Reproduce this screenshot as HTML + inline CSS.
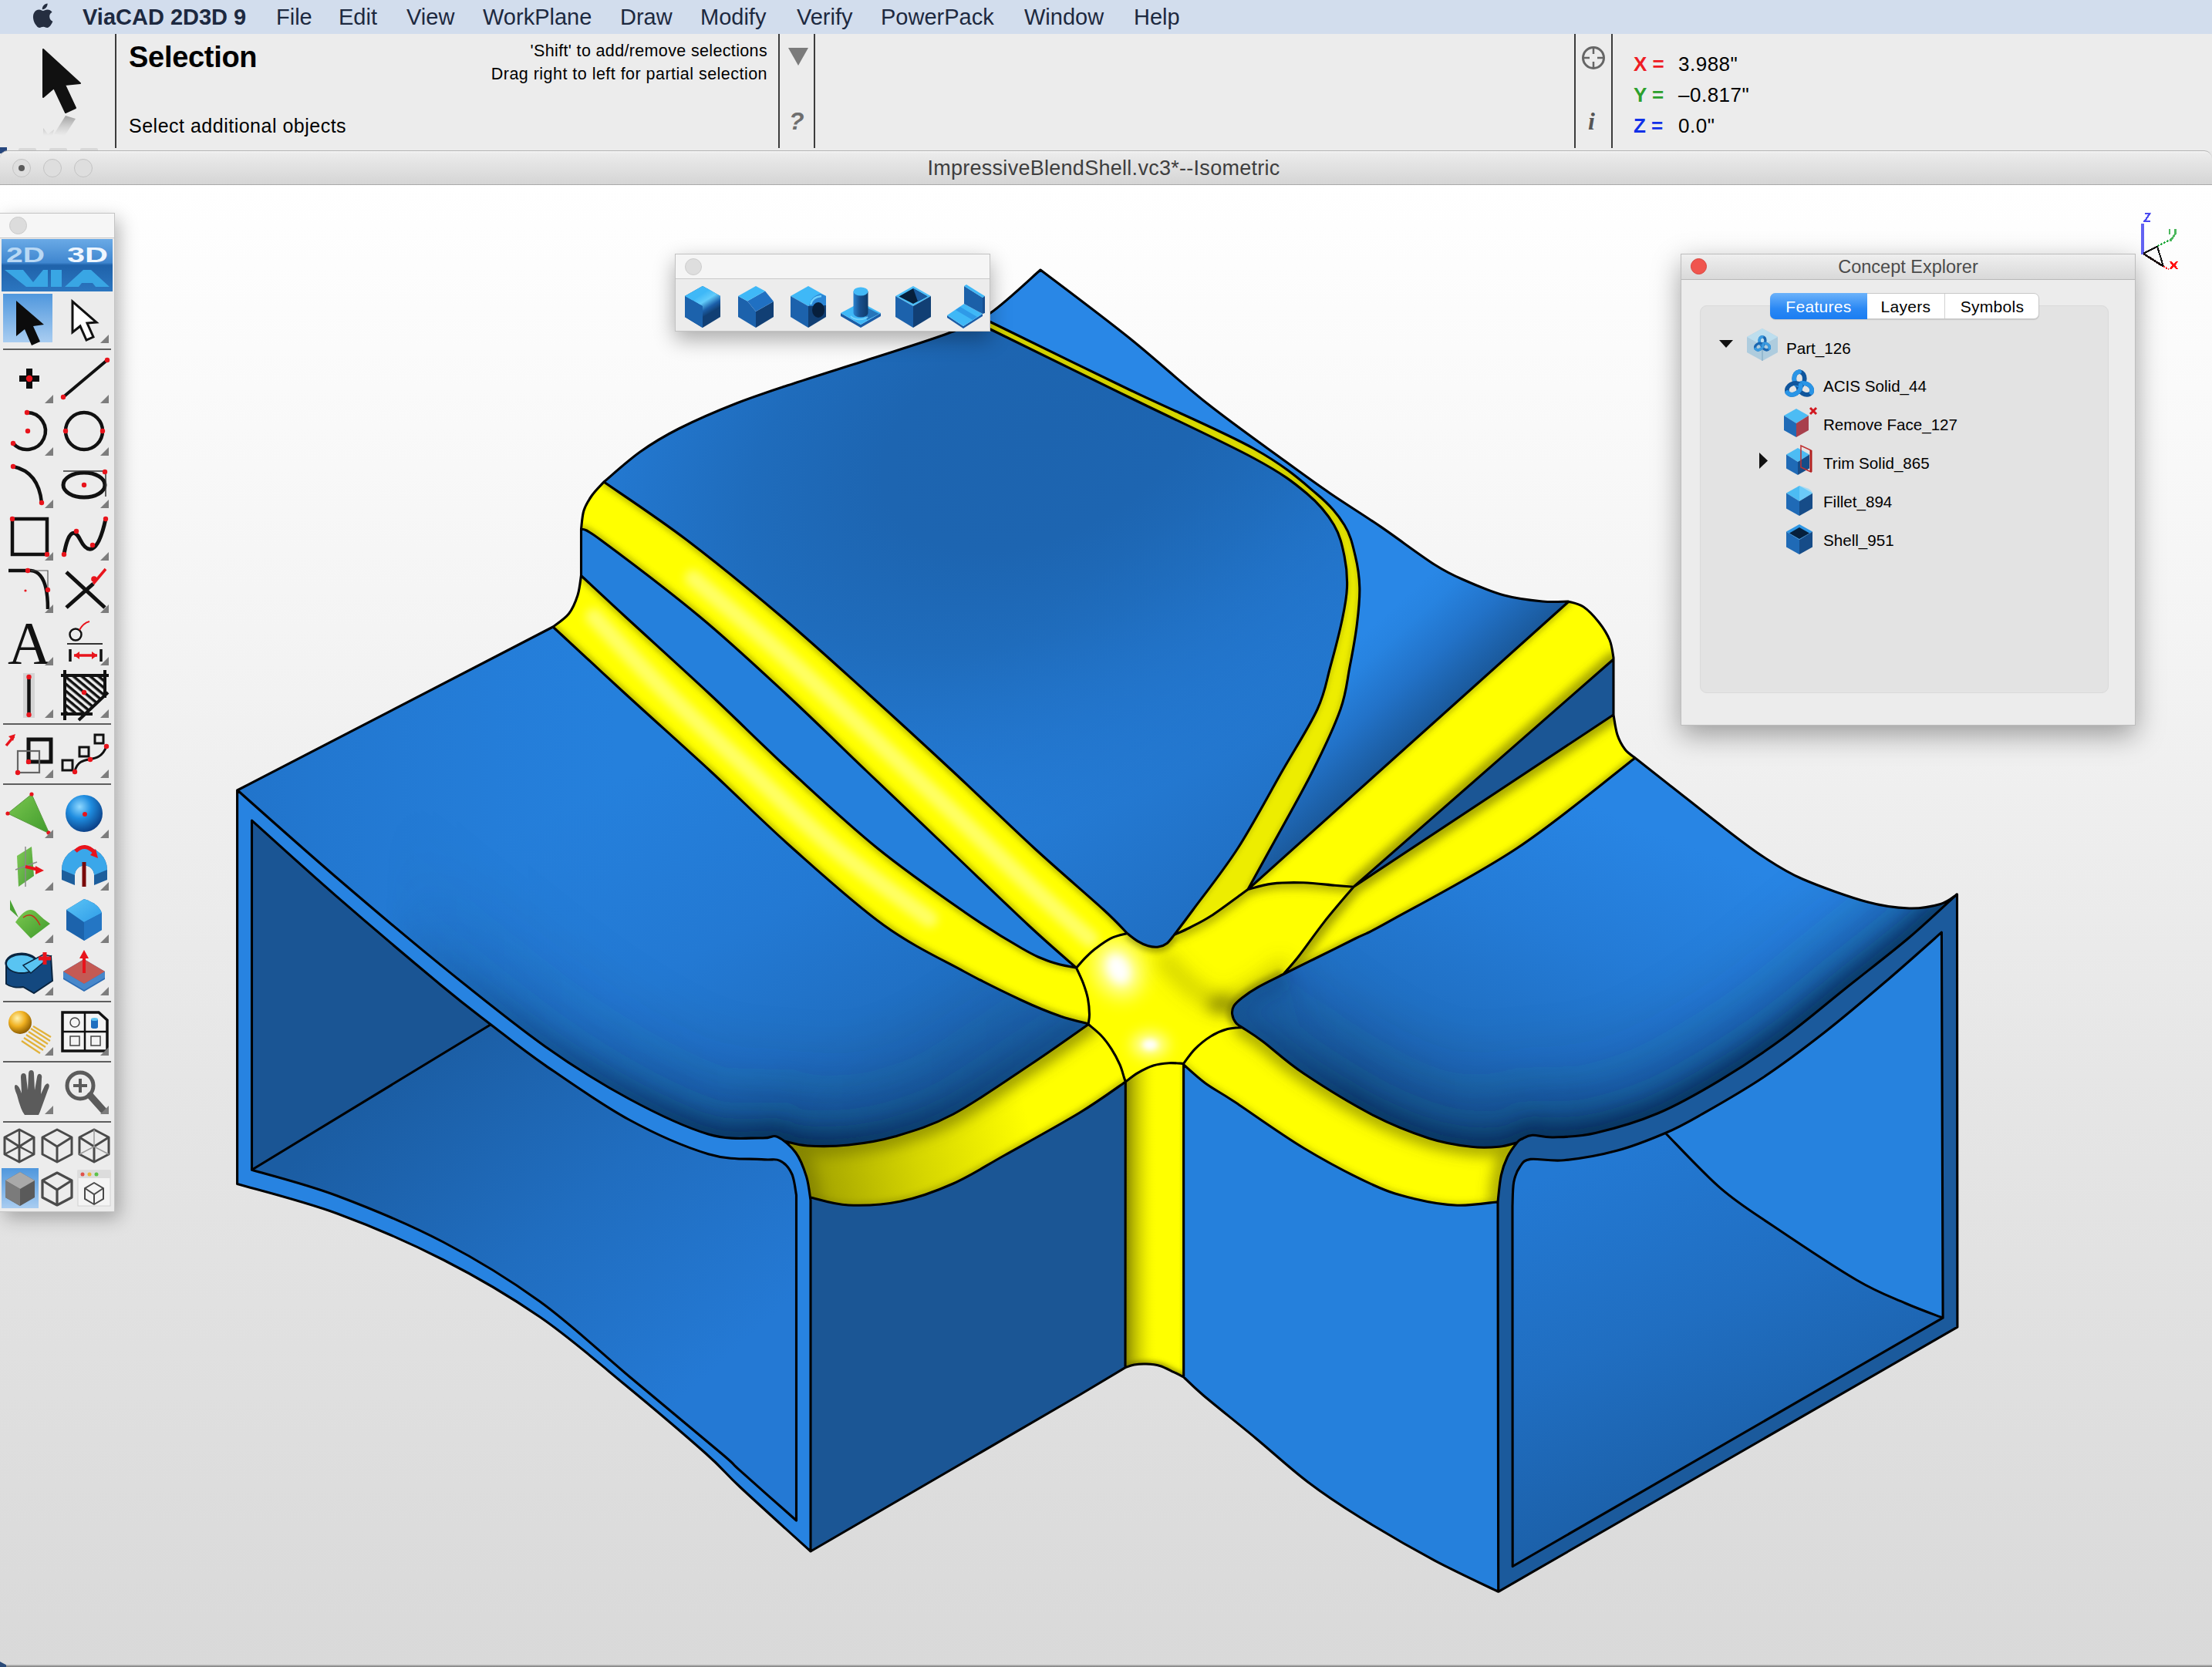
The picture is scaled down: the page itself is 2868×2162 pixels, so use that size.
<!DOCTYPE html>
<html>
<head>
<meta charset="utf-8">
<title>ViaCAD 2D3D 9</title>
<style>
html,body{margin:0;padding:0;}
body{width:2868px;height:2162px;position:relative;overflow:hidden;background:#e9e9e9;font-family:"Liberation Sans",sans-serif;color:#000;}
.abs{position:absolute;}
#menubar{left:0;top:0;width:2868px;height:44px;background:#d2dded;}
#menubar span{position:absolute;top:5px;font-size:29px;line-height:34px;color:#1d2940;white-space:nowrap;}
#infobar{left:0;top:44px;width:2868px;height:150px;background:#ececec;}
.vline{position:absolute;width:2px;background:#3c3c3c;top:44px;height:148px;}
#titlebar{left:0;top:195px;width:2868px;height:43px;background:linear-gradient(#f4f4f4 0,#ebebeb 8%,#d5d5d5 100%);border-bottom:1.500px solid #a9a9a9;border-top:1px solid #b4b4b4;border-radius:10px 10px 0 0;}
#canvas{left:0;top:240px;width:2868px;height:1922px;background:linear-gradient(#ffffff 0%,#f4f4f4 30%,#e6e6e6 60%,#d9d9d9 100%);}
.tl{position:absolute;width:22px;height:22px;border-radius:50%;background:#dedede;border:1px solid #c3c3c3;}
</style>
</head>
<body>
<!-- canvas -->
<div id="canvas" class="abs"></div>

<!-- MODEL -->
<!--MODEL_START-->
<svg class="abs" style="left:0;top:0" width="2868" height="2162" viewBox="0 0 2868 2162"><defs><filter id="bl3" filterUnits="userSpaceOnUse" x="250" y="300" width="2350" height="1800"><feGaussianBlur stdDeviation="3"/></filter>
<filter id="bl4" filterUnits="userSpaceOnUse" x="250" y="300" width="2350" height="1800"><feGaussianBlur stdDeviation="3.5"/></filter>
<filter id="bl6" filterUnits="userSpaceOnUse" x="250" y="300" width="2350" height="1800"><feGaussianBlur stdDeviation="6"/></filter>
<filter id="bl9" filterUnits="userSpaceOnUse" x="250" y="300" width="2350" height="1800"><feGaussianBlur stdDeviation="9"/></filter>
<filter id="bl12" filterUnits="userSpaceOnUse" x="250" y="300" width="2350" height="1800"><feGaussianBlur stdDeviation="12"/></filter>
<filter id="bl18" filterUnits="userSpaceOnUse" x="250" y="300" width="2350" height="1800"><feGaussianBlur stdDeviation="18"/></filter>
<filter id="bl25" filterUnits="userSpaceOnUse" x="250" y="300" width="2350" height="1800"><feGaussianBlur stdDeviation="25"/></filter>
<filter id="bl40" filterUnits="userSpaceOnUse" x="250" y="300" width="2350" height="1800"><feGaussianBlur stdDeviation="40"/></filter>
<filter id="bl22" filterUnits="userSpaceOnUse" x="250" y="300" width="2350" height="1800"><feGaussianBlur stdDeviation="26"/></filter>
<linearGradient id="mS1g" gradientUnits="userSpaceOnUse" x1="500" y1="0" x2="1420" y2="0"><stop offset="0" stop-color="#fff" stop-opacity="0"/><stop offset="0.2" stop-color="#fff" stop-opacity="0.5"/><stop offset="0.42" stop-color="#fff" stop-opacity="0.88"/><stop offset="0.58" stop-color="#fff" stop-opacity="1"/><stop offset="0.77" stop-color="#fff" stop-opacity="0.75"/><stop offset="0.92" stop-color="#fff" stop-opacity="0.42"/><stop offset="1" stop-color="#fff" stop-opacity="0.32"/></linearGradient>
<mask id="mS1" maskUnits="userSpaceOnUse" x="250" y="300" width="2350" height="1800"><rect x="250" y="300" width="2350" height="1800" fill="url(#mS1g)"/></mask>
<linearGradient id="mS4g" gradientUnits="userSpaceOnUse" x1="1600" y1="0" x2="2050" y2="0"><stop offset="0" stop-color="#fff" stop-opacity="0.3"/><stop offset="0.12" stop-color="#fff" stop-opacity="0.45"/><stop offset="0.35" stop-color="#fff" stop-opacity="0.85"/><stop offset="1" stop-color="#fff" stop-opacity="1"/></linearGradient>
<mask id="mS4" maskUnits="userSpaceOnUse" x="250" y="300" width="2350" height="1800"><rect x="250" y="300" width="2350" height="1800" fill="url(#mS4g)"/></mask>
<radialGradient id="gTop" gradientUnits="userSpaceOnUse" cx="1350" cy="560" r="780" gradientTransform="rotate(-26 1350 560) scale(1 0.62) translate(0 343)"><stop offset="0" stop-color="#1d64af"/><stop offset="0.28" stop-color="#1d65b1"/><stop offset="0.52" stop-color="#1f6cbc"/><stop offset="0.78" stop-color="#2378d0"/><stop offset="1" stop-color="#2783e0"/></radialGradient>
<linearGradient id="gTop2" gradientUnits="userSpaceOnUse" x1="1230" y1="880" x2="1480" y2="1230"><stop offset="0" stop-color="#2272c8" stop-opacity="0"/><stop offset="1" stop-color="#206fc3" stop-opacity="0.95"/></linearGradient>
<clipPath id="cS2"><path d="M783.0 625.0 C790.8 618.5 813.8 597.5 830.0 586.0 C846.2 574.5 859.2 566.5 880.0 556.0 C900.8 545.5 930.0 532.8 955.0 523.0 C980.0 513.2 1000.8 506.7 1030.0 497.0 C1059.2 487.3 1096.7 475.8 1130.0 465.0 C1163.3 454.2 1204.3 441.8 1230.0 432.0 C1255.7 422.2 1275.0 410.3 1284.0 406.0 L1284.0 406.0 L1276.0 423.0 L1276.0 423.0 C1277.3 423.7 1252.8 411.7 1284.0 427.0 C1315.2 442.3 1406.5 487.1 1463.5 515.0 C1520.5 542.9 1587.5 573.7 1626.0 594.5 C1664.5 615.3 1677.0 625.6 1694.3 640.0 C1711.5 654.4 1721.4 667.1 1729.5 680.7 C1737.6 694.3 1740.3 707.9 1743.1 721.4 C1745.9 734.9 1747.0 748.4 1746.5 762.0 C1746.0 775.6 1744.0 785.6 1740.4 802.8 C1736.8 820.0 1730.2 845.5 1724.8 865.0 C1719.4 884.5 1718.4 897.5 1708.0 920.0 C1697.6 942.5 1679.7 970.0 1662.5 1000.0 C1645.3 1030.0 1624.3 1070.0 1605.0 1100.0 C1585.7 1130.0 1560.6 1161.2 1546.8 1180.0 C1533.0 1198.8 1526.5 1207.1 1522.4 1212.5 L1522.4 1212.5 C1520.8 1214.3 1516.4 1220.8 1513.0 1223.4 C1509.6 1226.0 1506.1 1227.4 1502.0 1228.0 C1497.9 1228.6 1493.0 1228.0 1488.5 1226.8 C1484.0 1225.6 1479.5 1223.4 1475.0 1220.7 C1470.5 1218.0 1463.7 1212.2 1461.4 1210.5 L1461.4 1210.5 C1456.3 1205.4 1451.1 1198.4 1431.0 1180.0 C1410.9 1161.6 1373.7 1130.0 1341.0 1100.0 C1308.3 1070.0 1270.8 1033.3 1235.0 1000.0 C1199.2 966.7 1162.9 933.3 1126.0 900.0 C1089.1 866.7 1052.8 833.3 1013.5 800.0 C974.2 766.7 928.4 729.2 890.0 700.0 C851.6 670.8 800.8 637.5 783.0 625.0 Z"/></clipPath>
<linearGradient id="gS3" gradientUnits="userSpaceOnUse" x1="1828" y1="969" x2="1728" y2="858"><stop offset="0" stop-color="#1a589a"/><stop offset="0.12" stop-color="#1c5fa6"/><stop offset="0.45" stop-color="#2272c8"/><stop offset="0.8" stop-color="#2783e0"/><stop offset="1" stop-color="#2987e6"/></linearGradient>
<clipPath id="cS3"><path d="M1349.0 350.0 C1368.1 364.6 1427.5 408.9 1463.5 437.8 C1499.5 466.7 1531.3 496.5 1565.2 523.3 C1599.1 550.1 1640.3 579.1 1666.9 598.6 C1693.5 618.1 1704.2 625.9 1724.8 640.0 C1745.4 654.1 1768.1 668.0 1790.6 683.4 C1813.1 698.8 1841.8 720.6 1860.0 732.2 C1878.2 743.8 1885.0 746.4 1900.0 753.0 C1915.0 759.6 1933.3 767.5 1950.0 772.0 C1966.7 776.5 1986.2 778.7 2000.0 780.0 C2013.8 781.3 2027.5 780.0 2033.0 780.0 L1618.0 1153.6 L2033.0 781.0 L1618.0 1153.6 C1622.9 1144.7 1633.5 1125.6 1647.5 1100.0 C1661.5 1074.4 1686.9 1030.0 1702.0 1000.0 C1717.1 970.0 1730.0 942.5 1738.0 920.0 C1746.0 897.5 1746.4 883.4 1750.0 865.0 C1753.6 846.6 1757.3 826.7 1759.4 809.5 C1761.5 792.3 1763.2 776.7 1762.8 762.0 C1762.4 747.3 1760.6 734.9 1757.3 721.4 C1754.0 707.9 1751.5 694.3 1743.0 680.7 C1734.5 667.1 1726.0 656.5 1706.5 640.0 C1687.0 623.5 1666.5 604.5 1626.0 582.0 C1585.5 559.5 1520.5 532.4 1463.5 505.0 C1406.5 477.6 1316.2 433.3 1284.0 417.5 C1251.8 401.7 1272.3 411.2 1270.0 410.0 L1270.0 410.0 L1284.0 406.0 L1349.0 350.0 Z"/></clipPath>
<linearGradient id="gS1" gradientUnits="userSpaceOnUse" x1="820" y1="1000" x2="1080" y2="1490"><stop offset="0" stop-color="#2580dc"/><stop offset="0.45" stop-color="#2379d3"/><stop offset="0.75" stop-color="#2070c4"/><stop offset="1" stop-color="#1c62ab"/></linearGradient>
<linearGradient id="gS1b" gradientUnits="userSpaceOnUse" x1="310" y1="1100" x2="800" y2="1100"><stop offset="0" stop-color="#2174cb"/><stop offset="1" stop-color="#2378d2" stop-opacity="0"/></linearGradient>
<clipPath id="cS1"><path d="M307.6 1025.0 L717.0 813.0 L717.0 813.0 C732.7 827.5 777.0 868.8 811.0 900.0 C845.0 931.2 884.9 966.7 921.0 1000.0 C957.1 1033.3 990.0 1066.7 1027.5 1100.0 C1065.0 1133.3 1108.9 1173.3 1146.0 1200.0 C1183.1 1226.7 1220.2 1243.8 1250.0 1260.0 C1279.8 1276.2 1304.2 1287.8 1325.0 1297.5 C1345.8 1307.2 1360.6 1313.0 1375.0 1318.0 C1389.4 1323.0 1405.2 1326.2 1411.2 1327.8 L1411.2 1328.5 C1398.8 1337.1 1366.2 1360.6 1337.0 1380.0 C1307.8 1399.4 1265.5 1429.3 1236.0 1445.0 C1206.5 1460.7 1182.7 1467.3 1160.0 1474.0 C1137.3 1480.7 1118.8 1483.0 1100.0 1485.0 C1081.2 1487.0 1060.8 1486.8 1047.0 1486.0 C1033.2 1485.2 1022.0 1481.0 1017.0 1480.0 L1007.8 1474.4 C1004.4 1474.7 1002.1 1476.6 987.2 1476.0 C972.3 1475.4 947.0 1479.5 918.4 1471.0 C889.8 1462.5 850.6 1444.0 815.3 1425.0 C780.0 1406.0 747.5 1386.1 706.8 1357.2 C666.1 1328.3 616.4 1288.0 571.2 1251.4 C526.0 1214.8 479.5 1175.2 435.6 1137.5 C391.7 1099.8 329.3 1043.8 308.0 1025.0 Z"/></clipPath>
<linearGradient id="gS4" gradientUnits="userSpaceOnUse" x1="2150" y1="1080" x2="1990" y2="1480"><stop offset="0" stop-color="#2885e4"/><stop offset="0.4" stop-color="#247bd6"/><stop offset="0.75" stop-color="#2070c4"/><stop offset="1" stop-color="#1c62ab"/></linearGradient>
<clipPath id="cS4"><path d="M1664.0 1263.5 C1670.6 1260.2 1687.8 1251.8 1703.4 1244.0 C1719.0 1236.2 1741.6 1225.1 1757.7 1217.0 C1773.8 1208.9 1765.1 1215.1 1800.0 1195.6 C1834.9 1176.1 1913.7 1135.4 1967.0 1100.0 C2020.3 1064.6 2094.5 1002.5 2120.0 983.0 L2120.0 983.0 C2127.8 989.2 2147.5 1004.7 2167.0 1020.0 C2186.5 1035.3 2217.2 1059.8 2237.0 1075.0 C2256.8 1090.2 2269.3 1100.2 2286.0 1111.0 C2302.7 1121.8 2314.5 1130.2 2337.0 1140.0 C2359.5 1149.8 2397.9 1163.5 2421.0 1169.8 C2444.1 1176.1 2459.5 1177.5 2475.3 1178.0 C2491.1 1178.5 2505.6 1175.5 2516.0 1172.5 C2526.4 1169.5 2533.9 1162.1 2537.5 1160.0 L2537.0 1160.0 C2526.7 1169.3 2499.1 1195.8 2475.3 1216.0 C2451.5 1236.2 2421.1 1259.3 2394.0 1281.0 C2366.9 1302.7 2339.7 1326.1 2312.6 1346.0 C2285.5 1365.9 2258.3 1384.1 2231.2 1400.4 C2204.1 1416.7 2177.0 1432.3 2149.9 1443.8 C2122.8 1455.3 2091.1 1464.3 2068.5 1469.5 C2045.9 1474.7 2027.8 1474.5 2014.2 1475.0 C2000.6 1475.5 1993.9 1472.0 1987.1 1472.3 C1980.3 1472.6 1976.9 1475.4 1973.6 1477.0 C1970.2 1478.6 1968.1 1481.0 1967.0 1481.8 L1967.0 1481.8 C1963.1 1482.7 1953.5 1486.4 1943.6 1487.3 C1933.7 1488.2 1922.5 1489.1 1907.4 1487.3 C1892.3 1485.5 1874.3 1483.2 1853.2 1476.4 C1832.1 1469.6 1807.9 1460.6 1780.8 1446.6 C1753.7 1432.6 1714.2 1408.2 1690.4 1392.3 C1666.6 1376.4 1651.0 1361.0 1637.7 1351.0 C1624.4 1341.0 1615.1 1335.7 1610.6 1332.6 L1610.6 1332.6 C1609.2 1331.6 1604.6 1329.3 1602.4 1326.5 C1600.2 1323.7 1598.2 1319.2 1597.7 1315.6 C1597.2 1312.0 1597.6 1308.4 1599.7 1304.8 C1601.8 1301.2 1605.4 1298.1 1610.6 1294.0 C1615.8 1289.9 1622.1 1285.5 1631.0 1280.4 C1639.9 1275.3 1658.5 1266.3 1664.0 1263.5 Z"/></clipPath>
<clipPath id="cU1"><path d="M783.0 625.0 C800.8 637.5 851.6 670.8 890.0 700.0 C928.4 729.2 974.2 766.7 1013.5 800.0 C1052.8 833.3 1089.1 866.7 1126.0 900.0 C1162.9 933.3 1199.2 966.7 1235.0 1000.0 C1270.8 1033.3 1308.3 1070.0 1341.0 1100.0 C1373.7 1130.0 1410.9 1161.6 1431.0 1180.0 C1451.1 1198.4 1456.3 1205.4 1461.4 1210.5 L1461.4 1210.5 C1458.0 1211.5 1447.8 1213.3 1441.0 1216.6 C1434.2 1219.8 1426.4 1225.7 1420.7 1230.0 C1415.0 1234.3 1411.2 1238.2 1407.0 1242.4 C1402.8 1246.6 1397.5 1253.2 1395.6 1255.3 L1395.6 1255.3 C1385.2 1246.1 1361.3 1225.9 1333.5 1200.0 C1305.7 1174.1 1263.5 1133.3 1228.5 1100.0 C1193.5 1066.7 1158.4 1033.3 1123.5 1000.0 C1088.6 966.7 1055.0 933.3 1019.0 900.0 C983.0 866.7 947.6 833.3 907.5 800.0 C867.4 766.7 804.2 719.0 778.5 700.0 C752.8 681.0 757.7 688.3 753.5 686.0 L753.5 686.0 C754.1 682.0 754.7 669.2 757.0 662.0 C759.3 654.8 763.2 648.7 767.5 642.5 C771.8 636.3 780.4 627.9 783.0 625.0 Z"/></clipPath>
<clipPath id="cU2"><path d="M754.0 747.0 C763.5 755.8 783.3 774.5 811.0 800.0 C838.7 825.5 884.3 866.7 920.0 900.0 C955.7 933.3 988.8 966.7 1025.0 1000.0 C1061.2 1033.3 1100.0 1069.6 1137.5 1100.0 C1175.0 1130.4 1218.8 1160.8 1250.0 1182.5 C1281.2 1204.2 1306.2 1219.2 1325.0 1230.0 C1343.8 1240.8 1350.7 1243.3 1362.5 1247.5 C1374.3 1251.7 1390.1 1254.0 1395.6 1255.3 L1395.6 1255.3 C1397.1 1258.6 1401.9 1268.3 1404.4 1275.0 C1406.9 1281.7 1409.2 1288.5 1410.5 1295.3 C1411.8 1302.1 1412.4 1310.2 1412.5 1315.6 C1412.6 1321.0 1411.4 1325.8 1411.2 1327.8 L1411.2 1327.8 C1405.2 1326.2 1389.4 1323.0 1375.0 1318.0 C1360.6 1313.0 1345.8 1307.2 1325.0 1297.5 C1304.2 1287.8 1279.8 1276.2 1250.0 1260.0 C1220.2 1243.8 1183.1 1226.7 1146.0 1200.0 C1108.9 1173.3 1065.0 1133.3 1027.5 1100.0 C990.0 1066.7 957.1 1033.3 921.0 1000.0 C884.9 966.7 845.0 931.2 811.0 900.0 C777.0 868.8 732.7 827.5 717.0 813.0 L717.0 813.0 C720.4 810.2 732.2 802.8 737.5 796.0 C742.8 789.2 746.3 780.3 749.0 772.0 C751.7 763.7 752.8 750.3 753.5 746.0 Z"/></clipPath>
<clipPath id="cLb"><path d="M1411.2 1328.5 C1398.8 1337.1 1366.2 1360.6 1337.0 1380.0 C1307.8 1399.4 1265.5 1429.3 1236.0 1445.0 C1206.5 1460.7 1182.7 1467.3 1160.0 1474.0 C1137.3 1480.7 1118.8 1483.0 1100.0 1485.0 C1081.2 1487.0 1060.8 1486.8 1047.0 1486.0 C1033.2 1485.2 1022.0 1481.0 1017.0 1480.0 L1007.8 1474.4 C1011.8 1477.8 1025.5 1486.4 1031.8 1495.0 C1038.1 1503.6 1042.4 1515.7 1045.6 1526.0 C1048.8 1536.3 1050.1 1551.7 1051.0 1556.8 L1051.0 1553.0 C1059.2 1554.7 1080.5 1562.2 1100.0 1563.0 C1119.5 1563.8 1145.3 1562.7 1168.0 1558.0 C1190.7 1553.3 1213.5 1545.0 1236.0 1535.0 C1258.5 1525.0 1275.7 1513.3 1303.0 1498.0 C1330.3 1482.7 1374.0 1458.8 1400.0 1443.0 C1426.0 1427.2 1449.4 1409.7 1459.3 1403.0 L1459.3 1403.0 C1459.0 1402.0 1458.5 1400.7 1457.3 1397.0 C1456.1 1393.3 1454.6 1386.8 1451.9 1380.7 C1449.2 1374.6 1445.1 1366.7 1441.0 1360.4 C1436.9 1354.1 1432.5 1348.1 1427.5 1342.8 C1422.5 1337.5 1413.9 1330.9 1411.2 1328.5 Z"/></clipPath>
<clipPath id="cVb"><path d="M1459.3 1403.0 C1461.9 1401.1 1469.0 1395.1 1475.0 1391.6 C1481.0 1388.1 1488.5 1384.2 1495.3 1382.0 C1502.1 1379.8 1509.0 1379.1 1515.6 1378.7 C1522.1 1378.3 1531.4 1379.3 1534.6 1379.4 L1534.6 1379.4 L1534.7 1786.0 L1534.7 1786.0 C1532.6 1784.9 1527.1 1782.0 1522.0 1779.6 C1516.9 1777.2 1510.0 1773.2 1504.0 1771.4 C1498.0 1769.6 1491.6 1769.2 1486.0 1769.0 C1480.4 1768.8 1475.0 1769.2 1470.5 1770.0 C1466.0 1770.8 1460.9 1773.1 1459.0 1773.7 L1459.0 1773.7 L1459.3 1403.0 Z"/></clipPath>
<clipPath id="cRb"><path d="M1610.6 1332.6 C1615.1 1335.7 1624.4 1341.0 1637.7 1351.0 C1651.0 1361.0 1666.6 1376.4 1690.4 1392.3 C1714.2 1408.2 1753.7 1432.6 1780.8 1446.6 C1807.9 1460.6 1832.1 1469.6 1853.2 1476.4 C1874.3 1483.2 1892.3 1485.5 1907.4 1487.3 C1922.5 1489.1 1933.7 1488.2 1943.6 1487.3 C1953.5 1486.4 1963.1 1482.7 1967.0 1481.8 L1967.0 1481.8 C1964.9 1485.0 1957.9 1493.7 1954.4 1500.8 C1951.0 1507.9 1948.4 1514.6 1946.3 1524.3 C1944.2 1534.0 1942.7 1553.0 1942.0 1558.7 L1941.8 1558.7 C1933.0 1559.5 1907.1 1563.8 1889.3 1563.2 C1871.5 1562.6 1853.1 1559.4 1835.0 1555.0 C1816.9 1550.6 1804.9 1548.0 1780.8 1537.0 C1756.7 1526.0 1720.5 1507.1 1690.4 1489.0 C1660.3 1470.9 1621.2 1442.5 1600.0 1428.5 C1578.8 1414.5 1573.9 1413.0 1563.0 1405.0 C1552.1 1397.0 1539.3 1384.8 1534.6 1380.7 L1534.6 1379.4 C1537.1 1376.2 1543.6 1366.3 1549.5 1360.4 C1555.4 1354.5 1562.9 1348.3 1569.9 1344.0 C1576.9 1339.7 1584.8 1336.5 1591.6 1334.6 C1598.4 1332.7 1607.4 1332.9 1610.6 1332.6 Z"/></clipPath>
<clipPath id="cBb"><path d="M2033.0 781.0 L1618.0 1153.6 L1618.0 1153.6 C1623.2 1152.3 1637.2 1147.6 1649.2 1146.1 C1661.2 1144.6 1676.3 1144.4 1689.9 1144.8 C1703.5 1145.2 1719.8 1147.3 1730.6 1148.2 C1741.4 1149.1 1750.9 1149.9 1755.0 1150.2 L1755.0 1150.2 L2092.0 855.0 L2092.0 853.0 C2091.2 849.2 2090.2 837.7 2087.0 830.0 C2083.8 822.3 2078.7 814.2 2073.0 807.0 C2067.3 799.8 2059.7 791.5 2053.0 787.0 C2046.3 782.5 2036.3 781.2 2033.0 780.0 Z"/></clipPath>
<clipPath id="cAb"><path d="M2092.0 927.0 L1755.0 1150.2 L1755.0 1150.2 C1748.7 1157.8 1728.8 1180.6 1717.0 1195.6 C1705.2 1210.6 1692.8 1228.7 1684.0 1240.0 C1675.2 1251.3 1667.3 1259.6 1664.0 1263.5 L1664.0 1263.5 C1670.6 1260.2 1687.8 1251.8 1703.4 1244.0 C1719.0 1236.2 1741.6 1225.1 1757.7 1217.0 C1773.8 1208.9 1765.1 1215.1 1800.0 1195.6 C1834.9 1176.1 1913.7 1135.4 1967.0 1100.0 C2020.3 1064.6 2094.5 1002.5 2120.0 983.0 L2120.0 983.0 C2117.8 981.2 2110.8 977.0 2107.0 972.0 C2103.2 967.0 2099.5 960.5 2097.0 953.0 C2094.5 945.5 2092.8 931.3 2092.0 927.0 Z"/></clipPath>
<clipPath id="cTb"><path d="M1276.0 423.0 C1277.3 423.7 1252.8 411.7 1284.0 427.0 C1315.2 442.3 1406.5 487.1 1463.5 515.0 C1520.5 542.9 1587.5 573.7 1626.0 594.5 C1664.5 615.3 1677.0 625.6 1694.3 640.0 C1711.5 654.4 1721.4 667.1 1729.5 680.7 C1737.6 694.3 1740.3 707.9 1743.1 721.4 C1745.9 734.9 1747.0 748.4 1746.5 762.0 C1746.0 775.6 1744.0 785.6 1740.4 802.8 C1736.8 820.0 1730.2 845.5 1724.8 865.0 C1719.4 884.5 1718.4 897.5 1708.0 920.0 C1697.6 942.5 1679.7 970.0 1662.5 1000.0 C1645.3 1030.0 1624.3 1070.0 1605.0 1100.0 C1585.7 1130.0 1560.6 1161.2 1546.8 1180.0 C1533.0 1198.8 1526.5 1207.1 1522.4 1212.5 L1522.4 1212.5 C1525.8 1210.9 1534.9 1207.1 1542.8 1203.0 C1550.7 1198.9 1559.0 1195.1 1570.0 1188.0 C1581.0 1180.9 1600.5 1166.1 1608.5 1160.4 C1616.5 1154.7 1616.4 1154.7 1618.0 1153.6 L1618.0 1153.6 C1622.9 1144.7 1633.5 1125.6 1647.5 1100.0 C1661.5 1074.4 1686.9 1030.0 1702.0 1000.0 C1717.1 970.0 1730.0 942.5 1738.0 920.0 C1746.0 897.5 1746.4 883.4 1750.0 865.0 C1753.6 846.6 1757.3 826.7 1759.4 809.5 C1761.5 792.3 1763.2 776.7 1762.8 762.0 C1762.4 747.3 1760.6 734.9 1757.3 721.4 C1754.0 707.9 1751.5 694.3 1743.0 680.7 C1734.5 667.1 1726.0 656.5 1706.5 640.0 C1687.0 623.5 1666.5 604.5 1626.0 582.0 C1585.5 559.5 1520.5 532.4 1463.5 505.0 C1406.5 477.6 1316.2 433.3 1284.0 417.5 C1251.8 401.7 1272.3 411.2 1270.0 410.0 Z"/></clipPath>
<clipPath id="chub"><path d="M1395.6 1255.3 C1397.5 1253.2 1402.8 1246.6 1407.0 1242.4 C1411.2 1238.2 1415.0 1234.3 1420.7 1230.0 C1426.4 1225.7 1434.2 1219.8 1441.0 1216.6 C1447.8 1213.3 1458.0 1211.5 1461.4 1210.5 L1461.4 1210.5 C1463.7 1212.2 1470.5 1218.0 1475.0 1220.7 C1479.5 1223.4 1484.0 1225.6 1488.5 1226.8 C1493.0 1228.0 1497.9 1228.6 1502.0 1228.0 C1506.1 1227.4 1509.6 1226.0 1513.0 1223.4 C1516.4 1220.8 1520.8 1214.3 1522.4 1212.5 L1522.4 1212.5 C1525.8 1210.9 1534.9 1207.1 1542.8 1203.0 C1550.7 1198.9 1559.0 1195.1 1570.0 1188.0 C1581.0 1180.9 1600.5 1166.1 1608.5 1160.4 C1616.5 1154.7 1616.4 1154.7 1618.0 1153.6 L1618.0 1153.6 C1623.2 1152.3 1637.2 1147.6 1649.2 1146.1 C1661.2 1144.6 1676.3 1144.4 1689.9 1144.8 C1703.5 1145.2 1719.8 1147.3 1730.6 1148.2 C1741.4 1149.1 1750.9 1149.9 1755.0 1150.2 L1755.0 1150.2 C1748.7 1157.8 1728.8 1180.6 1717.0 1195.6 C1705.2 1210.6 1692.8 1228.7 1684.0 1240.0 C1675.2 1251.3 1667.3 1259.6 1664.0 1263.5 L1664.0 1263.5 C1658.5 1266.3 1639.9 1275.3 1631.0 1280.4 C1622.1 1285.5 1615.8 1289.9 1610.6 1294.0 C1605.4 1298.1 1601.8 1301.2 1599.7 1304.8 C1597.6 1308.4 1597.2 1312.0 1597.7 1315.6 C1598.2 1319.2 1600.2 1323.7 1602.4 1326.5 C1604.6 1329.3 1609.2 1331.6 1610.6 1332.6 L1610.6 1332.6 C1607.4 1332.9 1598.4 1332.7 1591.6 1334.6 C1584.8 1336.5 1576.9 1339.7 1569.9 1344.0 C1562.9 1348.3 1555.4 1354.5 1549.5 1360.4 C1543.6 1366.3 1537.1 1376.2 1534.6 1379.4 L1534.6 1379.4 C1531.4 1379.3 1522.1 1378.3 1515.6 1378.7 C1509.0 1379.1 1502.1 1379.8 1495.3 1382.0 C1488.5 1384.2 1481.0 1388.1 1475.0 1391.6 C1469.0 1395.1 1461.9 1401.1 1459.3 1403.0 L1459.3 1403.0 C1459.0 1402.0 1458.5 1400.7 1457.3 1397.0 C1456.1 1393.3 1454.6 1386.8 1451.9 1380.7 C1449.2 1374.6 1445.1 1366.7 1441.0 1360.4 C1436.9 1354.1 1432.5 1348.1 1427.5 1342.8 C1422.5 1337.5 1413.9 1330.9 1411.2 1328.5 L1411.2 1327.8 C1411.4 1325.8 1412.6 1321.0 1412.5 1315.6 C1412.4 1310.2 1411.8 1302.1 1410.5 1295.3 C1409.2 1288.5 1406.9 1281.7 1404.4 1275.0 C1401.9 1268.3 1397.1 1258.6 1395.6 1255.3 Z"/></clipPath>
<linearGradient id="gLb" gradientUnits="userSpaceOnUse" x1="1040" y1="1520" x2="1330" y2="1440"><stop offset="0" stop-color="#7d7d00" stop-opacity="0.75"/><stop offset="0.5" stop-color="#8a8a00" stop-opacity="0.35"/><stop offset="1" stop-color="#8a8a00" stop-opacity="0"/></linearGradient>
<linearGradient id="gVb" gradientUnits="userSpaceOnUse" x1="1459" y1="0" x2="1535" y2="0"><stop offset="0" stop-color="#6e6e00" stop-opacity="0.85"/><stop offset="0.28" stop-color="#b4b400" stop-opacity="0.45"/><stop offset="0.55" stop-color="#ffff00" stop-opacity="0"/><stop offset="0.9" stop-color="#ffff00" stop-opacity="0"/><stop offset="1" stop-color="#8a8a00" stop-opacity="0.55"/></linearGradient>
<linearGradient id="gLOfloor" gradientUnits="userSpaceOnUse" x1="520" y1="1380" x2="900" y2="1800"><stop offset="0" stop-color="#1b5da3"/><stop offset="0.5" stop-color="#206dbf"/><stop offset="1" stop-color="#2479d4"/></linearGradient>
<linearGradient id="gRO" gradientUnits="userSpaceOnUse" x1="2020" y1="1520" x2="2200" y2="1960"><stop offset="0" stop-color="#2379d3"/><stop offset="0.5" stop-color="#206ec1"/><stop offset="1" stop-color="#1b5fa7"/></linearGradient></defs>
<path d="M307.6 1025.0 L717.0 813.0 L717.0 813.0 C720.4 810.2 732.2 802.8 737.5 796.0 C742.8 789.2 746.3 780.3 749.0 772.0 C751.7 763.7 752.8 750.3 753.5 746.0 L753.5 746.0 L753.5 686.0 L753.5 686.0 C754.1 682.0 754.7 669.2 757.0 662.0 C759.3 654.8 763.2 648.7 767.5 642.5 C771.8 636.3 780.4 627.9 783.0 625.0 L783.0 625.0 C790.8 618.5 813.8 597.5 830.0 586.0 C846.2 574.5 859.2 566.5 880.0 556.0 C900.8 545.5 930.0 532.8 955.0 523.0 C980.0 513.2 1000.8 506.7 1030.0 497.0 C1059.2 487.3 1096.7 475.8 1130.0 465.0 C1163.3 454.2 1204.3 441.8 1230.0 432.0 C1255.7 422.2 1264.2 419.7 1284.0 406.0 C1303.8 392.3 1338.2 359.3 1349.0 350.0 L1349.0 350.0 C1368.1 364.6 1427.5 408.9 1463.5 437.8 C1499.5 466.7 1531.3 496.5 1565.2 523.3 C1599.1 550.1 1640.3 579.1 1666.9 598.6 C1693.5 618.1 1704.2 625.9 1724.8 640.0 C1745.4 654.1 1768.1 668.0 1790.6 683.4 C1813.1 698.8 1841.8 720.6 1860.0 732.2 C1878.2 743.8 1885.0 746.4 1900.0 753.0 C1915.0 759.6 1933.3 767.5 1950.0 772.0 C1966.7 776.5 1986.2 778.7 2000.0 780.0 C2013.8 781.3 2027.5 780.0 2033.0 780.0 L2033.0 780.0 C2036.3 781.2 2046.3 782.5 2053.0 787.0 C2059.7 791.5 2067.3 799.8 2073.0 807.0 C2078.7 814.2 2083.8 822.3 2087.0 830.0 C2090.2 837.7 2091.2 849.2 2092.0 853.0 L2092.0 853.0 L2092.0 927.0 L2092.0 927.0 C2092.8 931.3 2094.5 945.5 2097.0 953.0 C2099.5 960.5 2103.2 967.0 2107.0 972.0 C2110.8 977.0 2117.8 981.2 2120.0 983.0 L2120.0 983.0 C2127.8 989.2 2147.5 1004.7 2167.0 1020.0 C2186.5 1035.3 2217.2 1059.8 2237.0 1075.0 C2256.8 1090.2 2269.3 1100.2 2286.0 1111.0 C2302.7 1121.8 2314.5 1130.2 2337.0 1140.0 C2359.5 1149.8 2397.9 1163.5 2421.0 1169.8 C2444.1 1176.1 2459.5 1177.5 2475.3 1178.0 C2491.1 1178.5 2505.6 1175.5 2516.0 1172.5 C2526.4 1169.5 2533.9 1162.1 2537.5 1160.0 L2537.5 1160.0 L2537.9 1721.2 L2537.9 1721.2 L1942.7 2064.3 L1942.7 2064.3 C1928.9 2057.6 1889.9 2039.8 1860.0 2023.8 C1830.1 2007.8 1790.8 1985.0 1763.4 1968.0 C1736.0 1951.0 1718.2 1939.2 1695.6 1922.0 C1673.0 1904.8 1650.4 1883.8 1627.8 1865.0 C1605.2 1846.2 1575.5 1822.7 1560.0 1809.5 C1544.5 1796.3 1538.9 1789.9 1534.7 1786.0 L1534.7 1786.0 C1532.6 1784.9 1527.1 1782.0 1522.0 1779.6 C1516.9 1777.2 1510.0 1773.2 1504.0 1771.4 C1498.0 1769.6 1491.6 1769.2 1486.0 1769.0 C1480.4 1768.8 1475.0 1769.2 1470.5 1770.0 C1466.0 1770.8 1460.9 1773.1 1459.0 1773.7 L1459.0 1773.7 L1400.0 1809.0 L1051.0 2012.0 L1051.0 2012.0 C1035.8 1998.2 982.7 1950.2 960.0 1929.0 C937.3 1907.8 940.3 1907.5 915.0 1885.0 C889.7 1862.5 843.8 1823.5 808.0 1794.0 C772.2 1764.5 738.9 1734.7 700.0 1708.0 C661.1 1681.3 618.7 1656.3 574.9 1634.0 C531.1 1611.7 481.9 1590.4 437.4 1574.0 C392.8 1557.6 329.2 1541.9 307.6 1535.5 L307.6 1535.5 L307.6 1025.0 Z" fill="#2580dc" />
<path d="M783.0 625.0 C790.8 618.5 813.8 597.5 830.0 586.0 C846.2 574.5 859.2 566.5 880.0 556.0 C900.8 545.5 930.0 532.8 955.0 523.0 C980.0 513.2 1000.8 506.7 1030.0 497.0 C1059.2 487.3 1096.7 475.8 1130.0 465.0 C1163.3 454.2 1204.3 441.8 1230.0 432.0 C1255.7 422.2 1275.0 410.3 1284.0 406.0 L1284.0 406.0 L1276.0 423.0 L1276.0 423.0 C1277.3 423.7 1252.8 411.7 1284.0 427.0 C1315.2 442.3 1406.5 487.1 1463.5 515.0 C1520.5 542.9 1587.5 573.7 1626.0 594.5 C1664.5 615.3 1677.0 625.6 1694.3 640.0 C1711.5 654.4 1721.4 667.1 1729.5 680.7 C1737.6 694.3 1740.3 707.9 1743.1 721.4 C1745.9 734.9 1747.0 748.4 1746.5 762.0 C1746.0 775.6 1744.0 785.6 1740.4 802.8 C1736.8 820.0 1730.2 845.5 1724.8 865.0 C1719.4 884.5 1718.4 897.5 1708.0 920.0 C1697.6 942.5 1679.7 970.0 1662.5 1000.0 C1645.3 1030.0 1624.3 1070.0 1605.0 1100.0 C1585.7 1130.0 1560.6 1161.2 1546.8 1180.0 C1533.0 1198.8 1526.5 1207.1 1522.4 1212.5 L1522.4 1212.5 C1520.8 1214.3 1516.4 1220.8 1513.0 1223.4 C1509.6 1226.0 1506.1 1227.4 1502.0 1228.0 C1497.9 1228.6 1493.0 1228.0 1488.5 1226.8 C1484.0 1225.6 1479.5 1223.4 1475.0 1220.7 C1470.5 1218.0 1463.7 1212.2 1461.4 1210.5 L1461.4 1210.5 C1456.3 1205.4 1451.1 1198.4 1431.0 1180.0 C1410.9 1161.6 1373.7 1130.0 1341.0 1100.0 C1308.3 1070.0 1270.8 1033.3 1235.0 1000.0 C1199.2 966.7 1162.9 933.3 1126.0 900.0 C1089.1 866.7 1052.8 833.3 1013.5 800.0 C974.2 766.7 928.4 729.2 890.0 700.0 C851.6 670.8 800.8 637.5 783.0 625.0 Z" fill="url(#gTop)" />
<path d="M783.0 625.0 C790.8 618.5 813.8 597.5 830.0 586.0 C846.2 574.5 859.2 566.5 880.0 556.0 C900.8 545.5 930.0 532.8 955.0 523.0 C980.0 513.2 1000.8 506.7 1030.0 497.0 C1059.2 487.3 1096.7 475.8 1130.0 465.0 C1163.3 454.2 1204.3 441.8 1230.0 432.0 C1255.7 422.2 1275.0 410.3 1284.0 406.0 L1284.0 406.0 L1276.0 423.0 L1276.0 423.0 C1277.3 423.7 1252.8 411.7 1284.0 427.0 C1315.2 442.3 1406.5 487.1 1463.5 515.0 C1520.5 542.9 1587.5 573.7 1626.0 594.5 C1664.5 615.3 1677.0 625.6 1694.3 640.0 C1711.5 654.4 1721.4 667.1 1729.5 680.7 C1737.6 694.3 1740.3 707.9 1743.1 721.4 C1745.9 734.9 1747.0 748.4 1746.5 762.0 C1746.0 775.6 1744.0 785.6 1740.4 802.8 C1736.8 820.0 1730.2 845.5 1724.8 865.0 C1719.4 884.5 1718.4 897.5 1708.0 920.0 C1697.6 942.5 1679.7 970.0 1662.5 1000.0 C1645.3 1030.0 1624.3 1070.0 1605.0 1100.0 C1585.7 1130.0 1560.6 1161.2 1546.8 1180.0 C1533.0 1198.8 1526.5 1207.1 1522.4 1212.5 L1522.4 1212.5 C1520.8 1214.3 1516.4 1220.8 1513.0 1223.4 C1509.6 1226.0 1506.1 1227.4 1502.0 1228.0 C1497.9 1228.6 1493.0 1228.0 1488.5 1226.8 C1484.0 1225.6 1479.5 1223.4 1475.0 1220.7 C1470.5 1218.0 1463.7 1212.2 1461.4 1210.5 L1461.4 1210.5 C1456.3 1205.4 1451.1 1198.4 1431.0 1180.0 C1410.9 1161.6 1373.7 1130.0 1341.0 1100.0 C1308.3 1070.0 1270.8 1033.3 1235.0 1000.0 C1199.2 966.7 1162.9 933.3 1126.0 900.0 C1089.1 866.7 1052.8 833.3 1013.5 800.0 C974.2 766.7 928.4 729.2 890.0 700.0 C851.6 670.8 800.8 637.5 783.0 625.0 Z" fill="url(#gTop2)" />
<path d="M1349.0 350.0 C1368.1 364.6 1427.5 408.9 1463.5 437.8 C1499.5 466.7 1531.3 496.5 1565.2 523.3 C1599.1 550.1 1640.3 579.1 1666.9 598.6 C1693.5 618.1 1704.2 625.9 1724.8 640.0 C1745.4 654.1 1768.1 668.0 1790.6 683.4 C1813.1 698.8 1841.8 720.6 1860.0 732.2 C1878.2 743.8 1885.0 746.4 1900.0 753.0 C1915.0 759.6 1933.3 767.5 1950.0 772.0 C1966.7 776.5 1986.2 778.7 2000.0 780.0 C2013.8 781.3 2027.5 780.0 2033.0 780.0 L1618.0 1153.6 L2033.0 781.0 L1618.0 1153.6 C1622.9 1144.7 1633.5 1125.6 1647.5 1100.0 C1661.5 1074.4 1686.9 1030.0 1702.0 1000.0 C1717.1 970.0 1730.0 942.5 1738.0 920.0 C1746.0 897.5 1746.4 883.4 1750.0 865.0 C1753.6 846.6 1757.3 826.7 1759.4 809.5 C1761.5 792.3 1763.2 776.7 1762.8 762.0 C1762.4 747.3 1760.6 734.9 1757.3 721.4 C1754.0 707.9 1751.5 694.3 1743.0 680.7 C1734.5 667.1 1726.0 656.5 1706.5 640.0 C1687.0 623.5 1666.5 604.5 1626.0 582.0 C1585.5 559.5 1520.5 532.4 1463.5 505.0 C1406.5 477.6 1316.2 433.3 1284.0 417.5 C1251.8 401.7 1272.3 411.2 1270.0 410.0 L1270.0 410.0 L1284.0 406.0 L1349.0 350.0 Z" fill="url(#gS3)" />
<path d="M307.6 1025.0 L717.0 813.0 L717.0 813.0 C732.7 827.5 777.0 868.8 811.0 900.0 C845.0 931.2 884.9 966.7 921.0 1000.0 C957.1 1033.3 990.0 1066.7 1027.5 1100.0 C1065.0 1133.3 1108.9 1173.3 1146.0 1200.0 C1183.1 1226.7 1220.2 1243.8 1250.0 1260.0 C1279.8 1276.2 1304.2 1287.8 1325.0 1297.5 C1345.8 1307.2 1360.6 1313.0 1375.0 1318.0 C1389.4 1323.0 1405.2 1326.2 1411.2 1327.8 L1411.2 1328.5 C1398.8 1337.1 1366.2 1360.6 1337.0 1380.0 C1307.8 1399.4 1265.5 1429.3 1236.0 1445.0 C1206.5 1460.7 1182.7 1467.3 1160.0 1474.0 C1137.3 1480.7 1118.8 1483.0 1100.0 1485.0 C1081.2 1487.0 1060.8 1486.8 1047.0 1486.0 C1033.2 1485.2 1022.0 1481.0 1017.0 1480.0 L1007.8 1474.4 C1004.4 1474.7 1002.1 1476.6 987.2 1476.0 C972.3 1475.4 947.0 1479.5 918.4 1471.0 C889.8 1462.5 850.6 1444.0 815.3 1425.0 C780.0 1406.0 747.5 1386.1 706.8 1357.2 C666.1 1328.3 616.4 1288.0 571.2 1251.4 C526.0 1214.8 479.5 1175.2 435.6 1137.5 C391.7 1099.8 329.3 1043.8 308.0 1025.0 Z" fill="url(#gS1)" />
<path d="M307.6 1025.0 L717.0 813.0 L717.0 813.0 C732.7 827.5 777.0 868.8 811.0 900.0 C845.0 931.2 884.9 966.7 921.0 1000.0 C957.1 1033.3 990.0 1066.7 1027.5 1100.0 C1065.0 1133.3 1108.9 1173.3 1146.0 1200.0 C1183.1 1226.7 1220.2 1243.8 1250.0 1260.0 C1279.8 1276.2 1304.2 1287.8 1325.0 1297.5 C1345.8 1307.2 1360.6 1313.0 1375.0 1318.0 C1389.4 1323.0 1405.2 1326.2 1411.2 1327.8 L1411.2 1328.5 C1398.8 1337.1 1366.2 1360.6 1337.0 1380.0 C1307.8 1399.4 1265.5 1429.3 1236.0 1445.0 C1206.5 1460.7 1182.7 1467.3 1160.0 1474.0 C1137.3 1480.7 1118.8 1483.0 1100.0 1485.0 C1081.2 1487.0 1060.8 1486.8 1047.0 1486.0 C1033.2 1485.2 1022.0 1481.0 1017.0 1480.0 L1007.8 1474.4 C1004.4 1474.7 1002.1 1476.6 987.2 1476.0 C972.3 1475.4 947.0 1479.5 918.4 1471.0 C889.8 1462.5 850.6 1444.0 815.3 1425.0 C780.0 1406.0 747.5 1386.1 706.8 1357.2 C666.1 1328.3 616.4 1288.0 571.2 1251.4 C526.0 1214.8 479.5 1175.2 435.6 1137.5 C391.7 1099.8 329.3 1043.8 308.0 1025.0 Z" fill="url(#gS1b)" />
<g mask="url(#mS1)"><g clip-path="url(#cS1)"><path d="M1411.2 1328.5 C1398.8 1337.1 1366.2 1360.6 1337.0 1380.0 C1307.8 1399.4 1265.5 1429.3 1236.0 1445.0 C1206.5 1460.7 1182.7 1467.3 1160.0 1474.0 C1137.3 1480.7 1118.8 1483.0 1100.0 1485.0 C1081.2 1487.0 1060.8 1486.8 1047.0 1486.0 C1033.2 1485.2 1023.5 1481.9 1017.0 1480.0 C1010.5 1478.1 1012.8 1475.1 1007.8 1474.4 C1002.8 1473.7 1002.1 1476.6 987.2 1476.0 C972.3 1475.4 947.0 1479.5 918.4 1471.0 C889.8 1462.5 850.6 1444.0 815.3 1425.0 C780.0 1406.0 747.5 1386.1 706.8 1357.2 C666.1 1328.3 616.4 1288.0 571.2 1251.4 C526.0 1214.8 458.2 1156.5 435.6 1137.5" fill="none" stroke="#06203f" stroke-opacity=".17" stroke-width="180" filter="url(#bl40)"/><path d="M1411.2 1328.5 C1398.8 1337.1 1366.2 1360.6 1337.0 1380.0 C1307.8 1399.4 1265.5 1429.3 1236.0 1445.0 C1206.5 1460.7 1182.7 1467.3 1160.0 1474.0 C1137.3 1480.7 1118.8 1483.0 1100.0 1485.0 C1081.2 1487.0 1060.8 1486.8 1047.0 1486.0 C1033.2 1485.2 1023.5 1481.9 1017.0 1480.0 C1010.5 1478.1 1012.8 1475.1 1007.8 1474.4 C1002.8 1473.7 1002.1 1476.6 987.2 1476.0 C972.3 1475.4 947.0 1479.5 918.4 1471.0 C889.8 1462.5 850.6 1444.0 815.3 1425.0 C780.0 1406.0 747.5 1386.1 706.8 1357.2 C666.1 1328.3 616.4 1288.0 571.2 1251.4 C526.0 1214.8 458.2 1156.5 435.6 1137.5" fill="none" stroke="#06203f" stroke-opacity=".3" stroke-width="92" filter="url(#bl22)"/><path d="M1411.2 1328.5 C1398.8 1337.1 1366.2 1360.6 1337.0 1380.0 C1307.8 1399.4 1265.5 1429.3 1236.0 1445.0 C1206.5 1460.7 1182.7 1467.3 1160.0 1474.0 C1137.3 1480.7 1118.8 1483.0 1100.0 1485.0 C1081.2 1487.0 1060.8 1486.8 1047.0 1486.0 C1033.2 1485.2 1023.5 1481.9 1017.0 1480.0 C1010.5 1478.1 1012.8 1475.1 1007.8 1474.4 C1002.8 1473.7 1002.1 1476.6 987.2 1476.0 C972.3 1475.4 947.0 1479.5 918.4 1471.0 C889.8 1462.5 850.6 1444.0 815.3 1425.0 C780.0 1406.0 747.5 1386.1 706.8 1357.2 C666.1 1328.3 616.4 1288.0 571.2 1251.4 C526.0 1214.8 458.2 1156.5 435.6 1137.5" fill="none" stroke="#06203f" stroke-opacity=".6" stroke-width="34" filter="url(#bl12)"/></g></g>
<path d="M753.5 686.0 C757.7 688.3 752.8 681.0 778.5 700.0 C804.2 719.0 867.4 766.7 907.5 800.0 C947.6 833.3 983.0 866.7 1019.0 900.0 C1055.0 933.3 1088.6 966.7 1123.5 1000.0 C1158.4 1033.3 1193.5 1066.7 1228.5 1100.0 C1263.5 1133.3 1305.7 1174.1 1333.5 1200.0 C1361.3 1225.9 1385.2 1246.1 1395.6 1255.3 L1395.6 1255.3 C1390.1 1254.0 1374.3 1251.7 1362.5 1247.5 C1350.7 1243.3 1343.8 1240.8 1325.0 1230.0 C1306.2 1219.2 1281.2 1204.2 1250.0 1182.5 C1218.8 1160.8 1175.0 1130.4 1137.5 1100.0 C1100.0 1069.6 1061.2 1033.3 1025.0 1000.0 C988.8 966.7 955.7 933.3 920.0 900.0 C884.3 866.7 838.7 825.5 811.0 800.0 C783.3 774.5 763.5 755.8 754.0 747.0 L753.5 746.0 L753.5 686.0 Z" fill="#2580dc" />
<path d="M1664.0 1263.5 C1670.6 1260.2 1687.8 1251.8 1703.4 1244.0 C1719.0 1236.2 1741.6 1225.1 1757.7 1217.0 C1773.8 1208.9 1765.1 1215.1 1800.0 1195.6 C1834.9 1176.1 1913.7 1135.4 1967.0 1100.0 C2020.3 1064.6 2094.5 1002.5 2120.0 983.0 L2120.0 983.0 C2127.8 989.2 2147.5 1004.7 2167.0 1020.0 C2186.5 1035.3 2217.2 1059.8 2237.0 1075.0 C2256.8 1090.2 2269.3 1100.2 2286.0 1111.0 C2302.7 1121.8 2314.5 1130.2 2337.0 1140.0 C2359.5 1149.8 2397.9 1163.5 2421.0 1169.8 C2444.1 1176.1 2459.5 1177.5 2475.3 1178.0 C2491.1 1178.5 2505.6 1175.5 2516.0 1172.5 C2526.4 1169.5 2533.9 1162.1 2537.5 1160.0 L2537.0 1160.0 C2526.7 1169.3 2499.1 1195.8 2475.3 1216.0 C2451.5 1236.2 2421.1 1259.3 2394.0 1281.0 C2366.9 1302.7 2339.7 1326.1 2312.6 1346.0 C2285.5 1365.9 2258.3 1384.1 2231.2 1400.4 C2204.1 1416.7 2177.0 1432.3 2149.9 1443.8 C2122.8 1455.3 2091.1 1464.3 2068.5 1469.5 C2045.9 1474.7 2027.8 1474.5 2014.2 1475.0 C2000.6 1475.5 1993.9 1472.0 1987.1 1472.3 C1980.3 1472.6 1976.9 1475.4 1973.6 1477.0 C1970.2 1478.6 1968.1 1481.0 1967.0 1481.8 L1967.0 1481.8 C1963.1 1482.7 1953.5 1486.4 1943.6 1487.3 C1933.7 1488.2 1922.5 1489.1 1907.4 1487.3 C1892.3 1485.5 1874.3 1483.2 1853.2 1476.4 C1832.1 1469.6 1807.9 1460.6 1780.8 1446.6 C1753.7 1432.6 1714.2 1408.2 1690.4 1392.3 C1666.6 1376.4 1651.0 1361.0 1637.7 1351.0 C1624.4 1341.0 1615.1 1335.7 1610.6 1332.6 L1610.6 1332.6 C1609.2 1331.6 1604.6 1329.3 1602.4 1326.5 C1600.2 1323.7 1598.2 1319.2 1597.7 1315.6 C1597.2 1312.0 1597.6 1308.4 1599.7 1304.8 C1601.8 1301.2 1605.4 1298.1 1610.6 1294.0 C1615.8 1289.9 1622.1 1285.5 1631.0 1280.4 C1639.9 1275.3 1658.5 1266.3 1664.0 1263.5 Z" fill="url(#gS4)" />
<g mask="url(#mS4)"><g clip-path="url(#cS4)"><path d="M2537.0 1160.0 C2526.7 1169.3 2499.1 1195.8 2475.3 1216.0 C2451.5 1236.2 2421.1 1259.3 2394.0 1281.0 C2366.9 1302.7 2339.7 1326.1 2312.6 1346.0 C2285.5 1365.9 2258.3 1384.1 2231.2 1400.4 C2204.1 1416.7 2177.0 1432.3 2149.9 1443.8 C2122.8 1455.3 2091.1 1464.3 2068.5 1469.5 C2045.9 1474.7 2027.8 1474.5 2014.2 1475.0 C2000.6 1475.5 1993.9 1472.0 1987.1 1472.3 C1980.3 1472.6 1976.9 1475.4 1973.6 1477.0 C1970.2 1478.6 1972.0 1480.1 1967.0 1481.8 C1962.0 1483.5 1953.5 1486.4 1943.6 1487.3 C1933.7 1488.2 1922.5 1489.1 1907.4 1487.3 C1892.3 1485.5 1874.3 1483.2 1853.2 1476.4 C1832.1 1469.6 1807.9 1460.6 1780.8 1446.6 C1753.7 1432.6 1714.2 1408.2 1690.4 1392.3 C1666.6 1376.4 1651.0 1361.0 1637.7 1351.0 C1624.4 1341.0 1616.5 1336.7 1610.6 1332.6 C1604.7 1328.5 1604.6 1329.3 1602.4 1326.5 C1600.2 1323.7 1598.2 1319.2 1597.7 1315.6 C1597.2 1312.0 1597.6 1308.4 1599.7 1304.8 C1601.8 1301.2 1605.4 1298.1 1610.6 1294.0 C1615.8 1289.9 1622.1 1285.5 1631.0 1280.4 C1639.9 1275.3 1658.5 1266.3 1664.0 1263.5" fill="none" stroke="#06203f" stroke-opacity=".17" stroke-width="180" filter="url(#bl40)"/><path d="M2537.0 1160.0 C2526.7 1169.3 2499.1 1195.8 2475.3 1216.0 C2451.5 1236.2 2421.1 1259.3 2394.0 1281.0 C2366.9 1302.7 2339.7 1326.1 2312.6 1346.0 C2285.5 1365.9 2258.3 1384.1 2231.2 1400.4 C2204.1 1416.7 2177.0 1432.3 2149.9 1443.8 C2122.8 1455.3 2091.1 1464.3 2068.5 1469.5 C2045.9 1474.7 2027.8 1474.5 2014.2 1475.0 C2000.6 1475.5 1993.9 1472.0 1987.1 1472.3 C1980.3 1472.6 1976.9 1475.4 1973.6 1477.0 C1970.2 1478.6 1972.0 1480.1 1967.0 1481.8 C1962.0 1483.5 1953.5 1486.4 1943.6 1487.3 C1933.7 1488.2 1922.5 1489.1 1907.4 1487.3 C1892.3 1485.5 1874.3 1483.2 1853.2 1476.4 C1832.1 1469.6 1807.9 1460.6 1780.8 1446.6 C1753.7 1432.6 1714.2 1408.2 1690.4 1392.3 C1666.6 1376.4 1651.0 1361.0 1637.7 1351.0 C1624.4 1341.0 1616.5 1336.7 1610.6 1332.6 C1604.7 1328.5 1604.6 1329.3 1602.4 1326.5 C1600.2 1323.7 1598.2 1319.2 1597.7 1315.6 C1597.2 1312.0 1597.6 1308.4 1599.7 1304.8 C1601.8 1301.2 1605.4 1298.1 1610.6 1294.0 C1615.8 1289.9 1622.1 1285.5 1631.0 1280.4 C1639.9 1275.3 1658.5 1266.3 1664.0 1263.5" fill="none" stroke="#06203f" stroke-opacity=".3" stroke-width="92" filter="url(#bl22)"/><path d="M2537.0 1160.0 C2526.7 1169.3 2499.1 1195.8 2475.3 1216.0 C2451.5 1236.2 2421.1 1259.3 2394.0 1281.0 C2366.9 1302.7 2339.7 1326.1 2312.6 1346.0 C2285.5 1365.9 2258.3 1384.1 2231.2 1400.4 C2204.1 1416.7 2177.0 1432.3 2149.9 1443.8 C2122.8 1455.3 2091.1 1464.3 2068.5 1469.5 C2045.9 1474.7 2027.8 1474.5 2014.2 1475.0 C2000.6 1475.5 1993.9 1472.0 1987.1 1472.3 C1980.3 1472.6 1976.9 1475.4 1973.6 1477.0 C1970.2 1478.6 1972.0 1480.1 1967.0 1481.8 C1962.0 1483.5 1953.5 1486.4 1943.6 1487.3 C1933.7 1488.2 1922.5 1489.1 1907.4 1487.3 C1892.3 1485.5 1874.3 1483.2 1853.2 1476.4 C1832.1 1469.6 1807.9 1460.6 1780.8 1446.6 C1753.7 1432.6 1714.2 1408.2 1690.4 1392.3 C1666.6 1376.4 1651.0 1361.0 1637.7 1351.0 C1624.4 1341.0 1616.5 1336.7 1610.6 1332.6 C1604.7 1328.5 1604.6 1329.3 1602.4 1326.5 C1600.2 1323.7 1598.2 1319.2 1597.7 1315.6 C1597.2 1312.0 1597.6 1308.4 1599.7 1304.8 C1601.8 1301.2 1605.4 1298.1 1610.6 1294.0 C1615.8 1289.9 1622.1 1285.5 1631.0 1280.4 C1639.9 1275.3 1658.5 1266.3 1664.0 1263.5" fill="none" stroke="#06203f" stroke-opacity=".6" stroke-width="34" filter="url(#bl12)"/></g></g>
<path d="M2092.0 855.0 L1755.0 1150.2 L1755.0 1150.2 L2092.0 927.0 L2092.0 927.0 L2092.0 853.0 Z" fill="#1b5695" />
<path d="M783.0 625.0 C800.8 637.5 851.6 670.8 890.0 700.0 C928.4 729.2 974.2 766.7 1013.5 800.0 C1052.8 833.3 1089.1 866.7 1126.0 900.0 C1162.9 933.3 1199.2 966.7 1235.0 1000.0 C1270.8 1033.3 1308.3 1070.0 1341.0 1100.0 C1373.7 1130.0 1410.9 1161.6 1431.0 1180.0 C1451.1 1198.4 1456.3 1205.4 1461.4 1210.5 L1461.4 1210.5 C1458.0 1211.5 1447.8 1213.3 1441.0 1216.6 C1434.2 1219.8 1426.4 1225.7 1420.7 1230.0 C1415.0 1234.3 1411.2 1238.2 1407.0 1242.4 C1402.8 1246.6 1397.5 1253.2 1395.6 1255.3 L1395.6 1255.3 C1385.2 1246.1 1361.3 1225.9 1333.5 1200.0 C1305.7 1174.1 1263.5 1133.3 1228.5 1100.0 C1193.5 1066.7 1158.4 1033.3 1123.5 1000.0 C1088.6 966.7 1055.0 933.3 1019.0 900.0 C983.0 866.7 947.6 833.3 907.5 800.0 C867.4 766.7 804.2 719.0 778.5 700.0 C752.8 681.0 757.7 688.3 753.5 686.0 L753.5 686.0 C754.1 682.0 754.7 669.2 757.0 662.0 C759.3 654.8 763.2 648.7 767.5 642.5 C771.8 636.3 780.4 627.9 783.0 625.0 Z" fill="#ffff00" />
<path d="M754.0 747.0 C763.5 755.8 783.3 774.5 811.0 800.0 C838.7 825.5 884.3 866.7 920.0 900.0 C955.7 933.3 988.8 966.7 1025.0 1000.0 C1061.2 1033.3 1100.0 1069.6 1137.5 1100.0 C1175.0 1130.4 1218.8 1160.8 1250.0 1182.5 C1281.2 1204.2 1306.2 1219.2 1325.0 1230.0 C1343.8 1240.8 1350.7 1243.3 1362.5 1247.5 C1374.3 1251.7 1390.1 1254.0 1395.6 1255.3 L1395.6 1255.3 C1397.1 1258.6 1401.9 1268.3 1404.4 1275.0 C1406.9 1281.7 1409.2 1288.5 1410.5 1295.3 C1411.8 1302.1 1412.4 1310.2 1412.5 1315.6 C1412.6 1321.0 1411.4 1325.8 1411.2 1327.8 L1411.2 1327.8 C1405.2 1326.2 1389.4 1323.0 1375.0 1318.0 C1360.6 1313.0 1345.8 1307.2 1325.0 1297.5 C1304.2 1287.8 1279.8 1276.2 1250.0 1260.0 C1220.2 1243.8 1183.1 1226.7 1146.0 1200.0 C1108.9 1173.3 1065.0 1133.3 1027.5 1100.0 C990.0 1066.7 957.1 1033.3 921.0 1000.0 C884.9 966.7 845.0 931.2 811.0 900.0 C777.0 868.8 732.7 827.5 717.0 813.0 L717.0 813.0 C720.4 810.2 732.2 802.8 737.5 796.0 C742.8 789.2 746.3 780.3 749.0 772.0 C751.7 763.7 752.8 750.3 753.5 746.0 Z" fill="#ffff00" />
<path d="M1411.2 1328.5 C1398.8 1337.1 1366.2 1360.6 1337.0 1380.0 C1307.8 1399.4 1265.5 1429.3 1236.0 1445.0 C1206.5 1460.7 1182.7 1467.3 1160.0 1474.0 C1137.3 1480.7 1118.8 1483.0 1100.0 1485.0 C1081.2 1487.0 1060.8 1486.8 1047.0 1486.0 C1033.2 1485.2 1022.0 1481.0 1017.0 1480.0 L1007.8 1474.4 C1011.8 1477.8 1025.5 1486.4 1031.8 1495.0 C1038.1 1503.6 1042.4 1515.7 1045.6 1526.0 C1048.8 1536.3 1050.1 1551.7 1051.0 1556.8 L1051.0 1553.0 C1059.2 1554.7 1080.5 1562.2 1100.0 1563.0 C1119.5 1563.8 1145.3 1562.7 1168.0 1558.0 C1190.7 1553.3 1213.5 1545.0 1236.0 1535.0 C1258.5 1525.0 1275.7 1513.3 1303.0 1498.0 C1330.3 1482.7 1374.0 1458.8 1400.0 1443.0 C1426.0 1427.2 1449.4 1409.7 1459.3 1403.0 L1459.3 1403.0 C1459.0 1402.0 1458.5 1400.7 1457.3 1397.0 C1456.1 1393.3 1454.6 1386.8 1451.9 1380.7 C1449.2 1374.6 1445.1 1366.7 1441.0 1360.4 C1436.9 1354.1 1432.5 1348.1 1427.5 1342.8 C1422.5 1337.5 1413.9 1330.9 1411.2 1328.5 Z" fill="#ffff00" />
<path d="M1459.3 1403.0 C1461.9 1401.1 1469.0 1395.1 1475.0 1391.6 C1481.0 1388.1 1488.5 1384.2 1495.3 1382.0 C1502.1 1379.8 1509.0 1379.1 1515.6 1378.7 C1522.1 1378.3 1531.4 1379.3 1534.6 1379.4 L1534.6 1379.4 L1534.7 1786.0 L1534.7 1786.0 C1532.6 1784.9 1527.1 1782.0 1522.0 1779.6 C1516.9 1777.2 1510.0 1773.2 1504.0 1771.4 C1498.0 1769.6 1491.6 1769.2 1486.0 1769.0 C1480.4 1768.8 1475.0 1769.2 1470.5 1770.0 C1466.0 1770.8 1460.9 1773.1 1459.0 1773.7 L1459.0 1773.7 L1459.3 1403.0 Z" fill="#ffff00" />
<path d="M1610.6 1332.6 C1615.1 1335.7 1624.4 1341.0 1637.7 1351.0 C1651.0 1361.0 1666.6 1376.4 1690.4 1392.3 C1714.2 1408.2 1753.7 1432.6 1780.8 1446.6 C1807.9 1460.6 1832.1 1469.6 1853.2 1476.4 C1874.3 1483.2 1892.3 1485.5 1907.4 1487.3 C1922.5 1489.1 1933.7 1488.2 1943.6 1487.3 C1953.5 1486.4 1963.1 1482.7 1967.0 1481.8 L1967.0 1481.8 C1964.9 1485.0 1957.9 1493.7 1954.4 1500.8 C1951.0 1507.9 1948.4 1514.6 1946.3 1524.3 C1944.2 1534.0 1942.7 1553.0 1942.0 1558.7 L1941.8 1558.7 C1933.0 1559.5 1907.1 1563.8 1889.3 1563.2 C1871.5 1562.6 1853.1 1559.4 1835.0 1555.0 C1816.9 1550.6 1804.9 1548.0 1780.8 1537.0 C1756.7 1526.0 1720.5 1507.1 1690.4 1489.0 C1660.3 1470.9 1621.2 1442.5 1600.0 1428.5 C1578.8 1414.5 1573.9 1413.0 1563.0 1405.0 C1552.1 1397.0 1539.3 1384.8 1534.6 1380.7 L1534.6 1379.4 C1537.1 1376.2 1543.6 1366.3 1549.5 1360.4 C1555.4 1354.5 1562.9 1348.3 1569.9 1344.0 C1576.9 1339.7 1584.8 1336.5 1591.6 1334.6 C1598.4 1332.7 1607.4 1332.9 1610.6 1332.6 Z" fill="#ffff00" />
<path d="M2033.0 781.0 L1618.0 1153.6 L1618.0 1153.6 C1623.2 1152.3 1637.2 1147.6 1649.2 1146.1 C1661.2 1144.6 1676.3 1144.4 1689.9 1144.8 C1703.5 1145.2 1719.8 1147.3 1730.6 1148.2 C1741.4 1149.1 1750.9 1149.9 1755.0 1150.2 L1755.0 1150.2 L2092.0 855.0 L2092.0 853.0 C2091.2 849.2 2090.2 837.7 2087.0 830.0 C2083.8 822.3 2078.7 814.2 2073.0 807.0 C2067.3 799.8 2059.7 791.5 2053.0 787.0 C2046.3 782.5 2036.3 781.2 2033.0 780.0 Z" fill="#ffff00" />
<path d="M2092.0 927.0 L1755.0 1150.2 L1755.0 1150.2 C1748.7 1157.8 1728.8 1180.6 1717.0 1195.6 C1705.2 1210.6 1692.8 1228.7 1684.0 1240.0 C1675.2 1251.3 1667.3 1259.6 1664.0 1263.5 L1664.0 1263.5 C1670.6 1260.2 1687.8 1251.8 1703.4 1244.0 C1719.0 1236.2 1741.6 1225.1 1757.7 1217.0 C1773.8 1208.9 1765.1 1215.1 1800.0 1195.6 C1834.9 1176.1 1913.7 1135.4 1967.0 1100.0 C2020.3 1064.6 2094.5 1002.5 2120.0 983.0 L2120.0 983.0 C2117.8 981.2 2110.8 977.0 2107.0 972.0 C2103.2 967.0 2099.5 960.5 2097.0 953.0 C2094.5 945.5 2092.8 931.3 2092.0 927.0 Z" fill="#ffff00" />
<path d="M1276.0 423.0 C1277.3 423.7 1252.8 411.7 1284.0 427.0 C1315.2 442.3 1406.5 487.1 1463.5 515.0 C1520.5 542.9 1587.5 573.7 1626.0 594.5 C1664.5 615.3 1677.0 625.6 1694.3 640.0 C1711.5 654.4 1721.4 667.1 1729.5 680.7 C1737.6 694.3 1740.3 707.9 1743.1 721.4 C1745.9 734.9 1747.0 748.4 1746.5 762.0 C1746.0 775.6 1744.0 785.6 1740.4 802.8 C1736.8 820.0 1730.2 845.5 1724.8 865.0 C1719.4 884.5 1718.4 897.5 1708.0 920.0 C1697.6 942.5 1679.7 970.0 1662.5 1000.0 C1645.3 1030.0 1624.3 1070.0 1605.0 1100.0 C1585.7 1130.0 1560.6 1161.2 1546.8 1180.0 C1533.0 1198.8 1526.5 1207.1 1522.4 1212.5 L1522.4 1212.5 C1525.8 1210.9 1534.9 1207.1 1542.8 1203.0 C1550.7 1198.9 1559.0 1195.1 1570.0 1188.0 C1581.0 1180.9 1600.5 1166.1 1608.5 1160.4 C1616.5 1154.7 1616.4 1154.7 1618.0 1153.6 L1618.0 1153.6 C1622.9 1144.7 1633.5 1125.6 1647.5 1100.0 C1661.5 1074.4 1686.9 1030.0 1702.0 1000.0 C1717.1 970.0 1730.0 942.5 1738.0 920.0 C1746.0 897.5 1746.4 883.4 1750.0 865.0 C1753.6 846.6 1757.3 826.7 1759.4 809.5 C1761.5 792.3 1763.2 776.7 1762.8 762.0 C1762.4 747.3 1760.6 734.9 1757.3 721.4 C1754.0 707.9 1751.5 694.3 1743.0 680.7 C1734.5 667.1 1726.0 656.5 1706.5 640.0 C1687.0 623.5 1666.5 604.5 1626.0 582.0 C1585.5 559.5 1520.5 532.4 1463.5 505.0 C1406.5 477.6 1316.2 433.3 1284.0 417.5 C1251.8 401.7 1272.3 411.2 1270.0 410.0 Z" fill="#ffff00" />
<path d="M1395.6 1255.3 C1397.5 1253.2 1402.8 1246.6 1407.0 1242.4 C1411.2 1238.2 1415.0 1234.3 1420.7 1230.0 C1426.4 1225.7 1434.2 1219.8 1441.0 1216.6 C1447.8 1213.3 1458.0 1211.5 1461.4 1210.5 L1461.4 1210.5 C1463.7 1212.2 1470.5 1218.0 1475.0 1220.7 C1479.5 1223.4 1484.0 1225.6 1488.5 1226.8 C1493.0 1228.0 1497.9 1228.6 1502.0 1228.0 C1506.1 1227.4 1509.6 1226.0 1513.0 1223.4 C1516.4 1220.8 1520.8 1214.3 1522.4 1212.5 L1522.4 1212.5 C1525.8 1210.9 1534.9 1207.1 1542.8 1203.0 C1550.7 1198.9 1559.0 1195.1 1570.0 1188.0 C1581.0 1180.9 1600.5 1166.1 1608.5 1160.4 C1616.5 1154.7 1616.4 1154.7 1618.0 1153.6 L1618.0 1153.6 C1623.2 1152.3 1637.2 1147.6 1649.2 1146.1 C1661.2 1144.6 1676.3 1144.4 1689.9 1144.8 C1703.5 1145.2 1719.8 1147.3 1730.6 1148.2 C1741.4 1149.1 1750.9 1149.9 1755.0 1150.2 L1755.0 1150.2 C1748.7 1157.8 1728.8 1180.6 1717.0 1195.6 C1705.2 1210.6 1692.8 1228.7 1684.0 1240.0 C1675.2 1251.3 1667.3 1259.6 1664.0 1263.5 L1664.0 1263.5 C1658.5 1266.3 1639.9 1275.3 1631.0 1280.4 C1622.1 1285.5 1615.8 1289.9 1610.6 1294.0 C1605.4 1298.1 1601.8 1301.2 1599.7 1304.8 C1597.6 1308.4 1597.2 1312.0 1597.7 1315.6 C1598.2 1319.2 1600.2 1323.7 1602.4 1326.5 C1604.6 1329.3 1609.2 1331.6 1610.6 1332.6 L1610.6 1332.6 C1607.4 1332.9 1598.4 1332.7 1591.6 1334.6 C1584.8 1336.5 1576.9 1339.7 1569.9 1344.0 C1562.9 1348.3 1555.4 1354.5 1549.5 1360.4 C1543.6 1366.3 1537.1 1376.2 1534.6 1379.4 L1534.6 1379.4 C1531.4 1379.3 1522.1 1378.3 1515.6 1378.7 C1509.0 1379.1 1502.1 1379.8 1495.3 1382.0 C1488.5 1384.2 1481.0 1388.1 1475.0 1391.6 C1469.0 1395.1 1461.9 1401.1 1459.3 1403.0 L1459.3 1403.0 C1459.0 1402.0 1458.5 1400.7 1457.3 1397.0 C1456.1 1393.3 1454.6 1386.8 1451.9 1380.7 C1449.2 1374.6 1445.1 1366.7 1441.0 1360.4 C1436.9 1354.1 1432.5 1348.1 1427.5 1342.8 C1422.5 1337.5 1413.9 1330.9 1411.2 1328.5 L1411.2 1327.8 C1411.4 1325.8 1412.6 1321.0 1412.5 1315.6 C1412.4 1310.2 1411.8 1302.1 1410.5 1295.3 C1409.2 1288.5 1406.9 1281.7 1404.4 1275.0 C1401.9 1268.3 1397.1 1258.6 1395.6 1255.3 Z" fill="#ffff00" />
<g clip-path="url(#cU1)"><path d="M783.0 625.0 C800.8 637.5 851.6 670.8 890.0 700.0 C928.4 729.2 974.2 766.7 1013.5 800.0 C1052.8 833.3 1089.1 866.7 1126.0 900.0 C1162.9 933.3 1199.2 966.7 1235.0 1000.0 C1270.8 1033.3 1308.3 1070.0 1341.0 1100.0 C1373.7 1130.0 1410.9 1161.6 1431.0 1180.0 C1451.1 1198.4 1456.3 1205.4 1461.4 1210.5" fill="none" stroke="#5c5c00" stroke-opacity="0.38" stroke-width="10" stroke-linecap="round" filter="url(#bl4)"/></g>
<g clip-path="url(#cU1)"><path d="M753.5 686.0 C757.7 688.3 752.8 681.0 778.5 700.0 C804.2 719.0 867.4 766.7 907.5 800.0 C947.6 833.3 983.0 866.7 1019.0 900.0 C1055.0 933.3 1088.6 966.7 1123.5 1000.0 C1158.4 1033.3 1193.5 1066.7 1228.5 1100.0 C1263.5 1133.3 1305.7 1174.1 1333.5 1200.0 C1361.3 1225.9 1385.2 1246.1 1395.6 1255.3" fill="none" stroke="#5c5c00" stroke-opacity="0.38" stroke-width="10" stroke-linecap="round" filter="url(#bl4)"/></g>
<g clip-path="url(#cU1)"><path d="M898.8 750.0 C918.3 766.7 978.6 816.7 1016.2 850.0 C1053.9 883.3 1088.8 916.7 1124.8 950.0 C1160.7 983.3 1196.3 1016.7 1231.8 1050.0 C1267.2 1083.3 1307.0 1122.1 1337.2 1150.0 C1367.5 1177.9 1400.6 1206.4 1413.3 1217.7" fill="none" stroke="#ffff70" stroke-opacity="0.9" stroke-width="22" stroke-linecap="round" filter="url(#bl6)"/></g>
<g clip-path="url(#cU2)"><path d="M754.0 747.0 C763.5 755.8 783.3 774.5 811.0 800.0 C838.7 825.5 884.3 866.7 920.0 900.0 C955.7 933.3 988.8 966.7 1025.0 1000.0 C1061.2 1033.3 1100.0 1069.6 1137.5 1100.0 C1175.0 1130.4 1218.8 1160.8 1250.0 1182.5 C1281.2 1204.2 1306.2 1219.2 1325.0 1230.0 C1343.8 1240.8 1350.7 1243.3 1362.5 1247.5 C1374.3 1251.7 1390.1 1254.0 1395.6 1255.3" fill="none" stroke="#5c5c00" stroke-opacity="0.38" stroke-width="10" stroke-linecap="round" filter="url(#bl4)"/></g>
<g clip-path="url(#cU2)"><path d="M717.0 813.0 C732.7 827.5 777.0 868.8 811.0 900.0 C845.0 931.2 884.9 966.7 921.0 1000.0 C957.1 1033.3 990.0 1066.7 1027.5 1100.0 C1065.0 1133.3 1108.9 1173.3 1146.0 1200.0 C1183.1 1226.7 1220.2 1243.8 1250.0 1260.0 C1279.8 1276.2 1304.2 1287.8 1325.0 1297.5 C1345.8 1307.2 1360.6 1313.0 1375.0 1318.0 C1389.4 1323.0 1405.2 1326.2 1411.2 1327.8" fill="none" stroke="#5c5c00" stroke-opacity="0.4" stroke-width="10" stroke-linecap="round" filter="url(#bl4)"/></g>
<g clip-path="url(#cU2)"><path d="M770.0 800.0 C786.0 816.7 832.2 866.7 866.0 900.0 C899.8 933.3 937.0 966.7 973.0 1000.0 C1009.0 1033.3 1043.3 1068.0 1082.0 1100.0 C1120.7 1132.0 1184.5 1176.7 1205.0 1192.0" fill="none" stroke="#ffff70" stroke-opacity="0.9" stroke-width="22" stroke-linecap="round" filter="url(#bl6)"/></g>
<g clip-path="url(#cLb)"><path d="M1411.2 1328.5 C1398.8 1337.1 1366.2 1360.6 1337.0 1380.0 C1307.8 1399.4 1265.5 1429.3 1236.0 1445.0 C1206.5 1460.7 1182.7 1467.3 1160.0 1474.0 C1137.3 1480.7 1118.8 1483.0 1100.0 1485.0 C1081.2 1487.0 1060.8 1486.8 1047.0 1486.0 C1033.2 1485.2 1019.5 1478.5 1017.0 1480.0 C1014.5 1481.5 1027.0 1487.3 1031.8 1495.0 C1036.6 1502.7 1042.4 1515.7 1045.6 1526.0 C1048.8 1536.3 1050.1 1551.7 1051.0 1556.8" fill="none" stroke="#5c5c00" stroke-opacity="0.6" stroke-width="26" stroke-linecap="round" filter="url(#bl9)"/></g>
<g clip-path="url(#cLb)"><path d="M1459.3 1403.0 C1449.4 1409.7 1426.0 1427.2 1400.0 1443.0 C1374.0 1458.8 1330.3 1482.7 1303.0 1498.0 C1275.7 1513.3 1258.5 1525.0 1236.0 1535.0 C1213.5 1545.0 1190.7 1553.3 1168.0 1558.0 C1145.3 1562.7 1119.5 1563.8 1100.0 1563.0 C1080.5 1562.2 1059.2 1554.7 1051.0 1553.0" fill="none" stroke="#5c5c00" stroke-opacity="0.35" stroke-width="10" stroke-linecap="round" filter="url(#bl4)"/></g>
<g clip-path="url(#cLb)"><rect x="1000" y="1300" width="480" height="300" fill="url(#gLb)"/></g>
<g clip-path="url(#cVb)"><rect x="1450" y="1370" width="95" height="430" fill="url(#gVb)"/></g>
<g clip-path="url(#cVb)"><path d="M1534.7 1786.0 C1532.6 1784.9 1527.1 1782.0 1522.0 1779.6 C1516.9 1777.2 1510.0 1773.2 1504.0 1771.4 C1498.0 1769.6 1491.6 1769.2 1486.0 1769.0 C1480.4 1768.8 1475.0 1769.2 1470.5 1770.0 C1466.0 1770.8 1460.9 1773.1 1459.0 1773.7" fill="none" stroke="#5c5c00" stroke-opacity="0.6" stroke-width="8" stroke-linecap="round" filter="url(#bl3)"/></g>
<g clip-path="url(#cRb)"><path d="M1610.6 1332.6 C1615.1 1335.7 1624.4 1341.0 1637.7 1351.0 C1651.0 1361.0 1666.6 1376.4 1690.4 1392.3 C1714.2 1408.2 1753.7 1432.6 1780.8 1446.6 C1807.9 1460.6 1832.1 1469.6 1853.2 1476.4 C1874.3 1483.2 1892.3 1485.5 1907.4 1487.3 C1922.5 1489.1 1933.7 1488.2 1943.6 1487.3 C1953.5 1486.4 1965.2 1479.5 1967.0 1481.8 C1968.8 1484.0 1957.9 1493.7 1954.4 1500.8 C1951.0 1507.9 1948.4 1514.6 1946.3 1524.3 C1944.2 1534.0 1942.7 1553.0 1942.0 1558.7" fill="none" stroke="#5c5c00" stroke-opacity="0.55" stroke-width="22" stroke-linecap="round" filter="url(#bl9)"/></g>
<g clip-path="url(#cRb)"><path d="M1534.6 1380.7 C1539.3 1384.8 1552.1 1397.0 1563.0 1405.0 C1573.9 1413.0 1578.8 1414.5 1600.0 1428.5 C1621.2 1442.5 1660.3 1470.9 1690.4 1489.0 C1720.5 1507.1 1756.7 1526.0 1780.8 1537.0 C1804.9 1548.0 1816.9 1550.6 1835.0 1555.0 C1853.1 1559.4 1871.5 1562.6 1889.3 1563.2 C1907.1 1563.8 1933.0 1559.5 1941.8 1558.7" fill="none" stroke="#5c5c00" stroke-opacity="0.28" stroke-width="9" stroke-linecap="round" filter="url(#bl4)"/></g>
<g clip-path="url(#cBb)"><path d="M2033.0 781.0 L1618.0 1153.6" fill="none" stroke="#5c5c00" stroke-opacity="0.35" stroke-width="10" stroke-linecap="round" filter="url(#bl4)"/></g>
<g clip-path="url(#cBb)"><path d="M2092.0 855.0 L1755.0 1150.2" fill="none" stroke="#5c5c00" stroke-opacity="0.55" stroke-width="20" stroke-linecap="round" filter="url(#bl6)"/></g>
<g clip-path="url(#cAb)"><path d="M2092.0 927.0 L1755.0 1150.2 L1717.0 1195.6 L1684.0 1240.0 L1664.0 1263.5" fill="none" stroke="#5c5c00" stroke-opacity="0.55" stroke-width="20" stroke-linecap="round" filter="url(#bl6)"/></g>
<g clip-path="url(#cAb)"><path d="M1664.0 1263.5 C1670.6 1260.2 1687.8 1251.8 1703.4 1244.0 C1719.0 1236.2 1741.6 1225.1 1757.7 1217.0 C1773.8 1208.9 1765.1 1215.1 1800.0 1195.6 C1834.9 1176.1 1913.7 1135.4 1967.0 1100.0 C2020.3 1064.6 2094.5 1002.5 2120.0 983.0" fill="none" stroke="#5c5c00" stroke-opacity="0.38" stroke-width="10" stroke-linecap="round" filter="url(#bl4)"/></g>
<g clip-path="url(#cTb)"><path d="M1276.0 423.0 C1277.3 423.7 1252.8 411.7 1284.0 427.0 C1315.2 442.3 1406.5 487.1 1463.5 515.0 C1520.5 542.9 1587.5 573.7 1626.0 594.5 C1664.5 615.3 1677.0 625.6 1694.3 640.0 C1711.5 654.4 1721.4 667.1 1729.5 680.7 C1737.6 694.3 1740.3 707.9 1743.1 721.4 C1745.9 734.9 1747.0 748.4 1746.5 762.0 C1746.0 775.6 1744.0 785.6 1740.4 802.8 C1736.8 820.0 1730.2 845.5 1724.8 865.0 C1719.4 884.5 1718.4 897.5 1708.0 920.0 C1697.6 942.5 1679.7 970.0 1662.5 1000.0 C1645.3 1030.0 1624.3 1070.0 1605.0 1100.0 C1585.7 1130.0 1560.6 1161.2 1546.8 1180.0 C1533.0 1198.8 1526.5 1207.1 1522.4 1212.5" fill="none" stroke="#5c5c00" stroke-opacity="0.45" stroke-width="7" stroke-linecap="round" filter="url(#bl3)"/></g>
<g clip-path="url(#cTb)"><path d="M1270.0 410.0 C1272.3 411.2 1251.8 401.7 1284.0 417.5 C1316.2 433.3 1406.5 477.6 1463.5 505.0 C1520.5 532.4 1585.5 559.5 1626.0 582.0 C1666.5 604.5 1687.0 623.5 1706.5 640.0 C1726.0 656.5 1734.5 667.1 1743.0 680.7 C1751.5 694.3 1754.0 707.9 1757.3 721.4 C1760.6 734.9 1762.4 747.3 1762.8 762.0 C1763.2 776.7 1761.5 792.3 1759.4 809.5 C1757.3 826.7 1753.6 846.6 1750.0 865.0 C1746.4 883.4 1746.0 897.5 1738.0 920.0 C1730.0 942.5 1717.1 970.0 1702.0 1000.0 C1686.9 1030.0 1661.5 1074.4 1647.5 1100.0 C1633.5 1125.6 1622.9 1144.7 1618.0 1153.6" fill="none" stroke="#5c5c00" stroke-opacity="0.45" stroke-width="7" stroke-linecap="round" filter="url(#bl3)"/></g>
<g clip-path="url(#cTb)"><path d="M1276.0 423.0 C1277.3 423.7 1252.8 411.7 1284.0 427.0 C1315.2 442.3 1406.5 487.1 1463.5 515.0 C1520.5 542.9 1587.5 573.7 1626.0 594.5 C1664.5 615.3 1677.0 625.6 1694.3 640.0 C1711.5 654.4 1721.4 667.1 1729.5 680.7 C1737.6 694.3 1740.3 707.9 1743.1 721.4 C1745.9 734.9 1747.0 748.4 1746.5 762.0 C1746.0 775.6 1744.0 785.6 1740.4 802.8 C1736.8 820.0 1730.2 845.5 1724.8 865.0 C1719.4 884.5 1718.4 897.5 1708.0 920.0 C1697.6 942.5 1679.7 970.0 1662.5 1000.0 C1645.3 1030.0 1624.3 1070.0 1605.0 1100.0 C1585.7 1130.0 1560.6 1161.2 1546.8 1180.0 C1533.0 1198.8 1526.5 1207.1 1522.4 1212.5 L1522.4 1212.5 C1525.8 1210.9 1534.9 1207.1 1542.8 1203.0 C1550.7 1198.9 1559.0 1195.1 1570.0 1188.0 C1581.0 1180.9 1600.5 1166.1 1608.5 1160.4 C1616.5 1154.7 1616.4 1154.7 1618.0 1153.6 L1618.0 1153.6 C1622.9 1144.7 1633.5 1125.6 1647.5 1100.0 C1661.5 1074.4 1686.9 1030.0 1702.0 1000.0 C1717.1 970.0 1730.0 942.5 1738.0 920.0 C1746.0 897.5 1746.4 883.4 1750.0 865.0 C1753.6 846.6 1757.3 826.7 1759.4 809.5 C1761.5 792.3 1763.2 776.7 1762.8 762.0 C1762.4 747.3 1760.6 734.9 1757.3 721.4 C1754.0 707.9 1751.5 694.3 1743.0 680.7 C1734.5 667.1 1726.0 656.5 1706.5 640.0 C1687.0 623.5 1666.5 604.5 1626.0 582.0 C1585.5 559.5 1520.5 532.4 1463.5 505.0 C1406.5 477.6 1316.2 433.3 1284.0 417.5 C1251.8 401.7 1272.3 411.2 1270.0 410.0 Z" fill="#dcdc00" opacity=".5"/></g>
<g clip-path="url(#chub)"><path d="M1505 1238 Q1545 1290 1585 1302 Q1630 1285 1668 1250" fill="none" stroke="#6a6a00" stroke-opacity=".3" stroke-width="22" filter="url(#bl12)"/><ellipse cx="1585" cy="1303" rx="20" ry="12" fill="#555500" opacity=".5" filter="url(#bl9)"/><path d="M1461.4 1210.5 C1463.7 1212.2 1470.5 1218.0 1475.0 1220.7 C1479.5 1223.4 1484.0 1225.6 1488.5 1226.8 C1493.0 1228.0 1497.9 1228.6 1502.0 1228.0 C1506.1 1227.4 1509.6 1226.0 1513.0 1223.4 C1516.4 1220.8 1520.8 1214.3 1522.4 1212.5" fill="none" stroke="#5c5c00" stroke-opacity=".5" stroke-width="14" filter="url(#bl4)"/><path d="M1664.0 1263.5 C1658.5 1266.3 1639.9 1275.3 1631.0 1280.4 C1622.1 1285.5 1615.8 1289.9 1610.6 1294.0 C1605.4 1298.1 1601.8 1301.2 1599.7 1304.8 C1597.6 1308.4 1597.2 1312.0 1597.7 1315.6 C1598.2 1319.2 1600.2 1323.7 1602.4 1326.5 C1604.6 1329.3 1609.2 1331.6 1610.6 1332.6" fill="none" stroke="#5c5c00" stroke-opacity=".5" stroke-width="14" filter="url(#bl4)"/><path d="M1522.4 1212.5 C1525.8 1210.9 1534.9 1207.1 1542.8 1203.0 C1550.7 1198.9 1559.0 1195.1 1570.0 1188.0 C1581.0 1180.9 1600.5 1166.1 1608.5 1160.4 C1616.5 1154.7 1611.2 1156.0 1618.0 1153.6 C1624.8 1151.2 1637.2 1147.6 1649.2 1146.1 C1661.2 1144.6 1676.3 1144.4 1689.9 1144.8 C1703.5 1145.2 1719.8 1147.3 1730.6 1148.2 C1741.4 1149.1 1750.9 1149.9 1755.0 1150.2" fill="none" stroke="#5c5c00" stroke-opacity=".45" stroke-width="16" filter="url(#bl6)"/><ellipse cx="1450" cy="1257" rx="30" ry="38" fill="#ffffb0" opacity=".9" filter="url(#bl12)" transform="rotate(-25 1450 1257)"/><ellipse cx="1450" cy="1257" rx="14" ry="20" fill="#fff" filter="url(#bl6)" transform="rotate(-25 1450 1257)"/><ellipse cx="1491" cy="1355" rx="24" ry="16" fill="#ffffb0" opacity=".9" filter="url(#bl9)"/><ellipse cx="1491" cy="1355" rx="10" ry="7" fill="#fff" filter="url(#bl4)"/></g>
<path d="M1459.3 1403.0 C1449.4 1409.7 1426.0 1427.2 1400.0 1443.0 C1374.0 1458.8 1330.3 1482.7 1303.0 1498.0 C1275.7 1513.3 1258.5 1525.0 1236.0 1535.0 C1213.5 1545.0 1190.7 1553.3 1168.0 1558.0 C1145.3 1562.7 1119.5 1563.8 1100.0 1563.0 C1080.5 1562.2 1059.2 1554.7 1051.0 1553.0 L1051.0 1553.0 L1051.0 2012.0 L1051.0 2012.0 L1400.0 1809.0 L1459.0 1773.7 L1459.0 1773.7 L1459.3 1403.0 Z" fill="#1b5695" />
<path d="M1534.6 1380.7 C1539.3 1384.8 1552.1 1397.0 1563.0 1405.0 C1573.9 1413.0 1578.8 1414.5 1600.0 1428.5 C1621.2 1442.5 1660.3 1470.9 1690.4 1489.0 C1720.5 1507.1 1756.7 1526.0 1780.8 1537.0 C1804.9 1548.0 1816.9 1550.6 1835.0 1555.0 C1853.1 1559.4 1871.5 1562.6 1889.3 1563.2 C1907.1 1563.8 1933.0 1559.5 1941.8 1558.7 L1941.8 1558.7 L1942.7 2064.3 L1942.7 2064.3 C1928.9 2057.6 1889.9 2039.8 1860.0 2023.8 C1830.1 2007.8 1790.8 1985.0 1763.4 1968.0 C1736.0 1951.0 1718.2 1939.2 1695.6 1922.0 C1673.0 1904.8 1650.4 1883.8 1627.8 1865.0 C1605.2 1846.2 1575.5 1822.7 1560.0 1809.5 C1544.5 1796.3 1538.9 1789.9 1534.7 1786.0 L1534.7 1786.0 L1534.6 1379.4 Z" fill="#2580dc" />
<path d="M308.0 1025.0 C329.3 1043.8 391.7 1099.8 435.6 1137.5 C479.5 1175.2 526.0 1214.8 571.2 1251.4 C616.4 1288.0 666.1 1328.3 706.8 1357.2 C747.5 1386.1 780.0 1406.0 815.3 1425.0 C850.6 1444.0 889.8 1462.5 918.4 1471.0 C947.0 1479.5 972.3 1475.4 987.2 1476.0 C1002.1 1476.6 1000.4 1471.2 1007.8 1474.4 C1015.2 1477.6 1025.5 1486.4 1031.8 1495.0 C1038.1 1503.6 1042.4 1515.7 1045.6 1526.0 C1048.8 1536.3 1050.1 1551.7 1051.0 1556.8 L1051.0 1556.8 L1051.0 2012.0 L1051.0 2012.0 C1035.8 1998.2 982.7 1950.2 960.0 1929.0 C937.3 1907.8 940.3 1907.5 915.0 1885.0 C889.7 1862.5 843.8 1823.5 808.0 1794.0 C772.2 1764.5 738.9 1734.7 700.0 1708.0 C661.1 1681.3 618.7 1656.3 574.9 1634.0 C531.1 1611.7 481.9 1590.4 437.4 1574.0 C392.8 1557.6 329.2 1541.9 307.6 1535.5 L307.6 1535.5 L307.6 1025.0 Z" fill="#2783e1" />
<path d="M326.5 1064.2 C344.7 1080.5 394.8 1126.4 435.6 1161.9 C476.4 1197.4 537.8 1249.4 571.2 1277.2 C604.7 1305.0 613.7 1311.3 636.3 1328.7 C658.9 1346.1 677.0 1361.0 706.8 1381.6 C736.6 1402.1 780.0 1432.8 815.3 1452.0 C850.6 1471.2 889.8 1488.1 918.4 1496.7 C947.0 1505.3 971.7 1502.2 987.2 1503.6 C1002.7 1505.0 1004.6 1502.1 1011.2 1505.3 C1017.8 1508.5 1023.2 1515.0 1026.7 1522.5 C1030.2 1530.0 1031.5 1545.4 1032.5 1550.0 L1032.5 1550.0 L1032.5 1972.0 L1032.5 1972.0 C1020.4 1961.3 976.2 1922.2 960.0 1907.7 C943.8 1893.2 959.0 1905.1 935.3 1885.0 C911.6 1864.9 857.2 1819.8 818.0 1787.0 C778.8 1754.2 740.5 1717.3 700.0 1688.0 C659.5 1658.7 618.7 1633.8 574.9 1611.0 C531.1 1588.2 478.8 1566.6 437.4 1551.0 C396.0 1535.4 345.0 1522.9 326.5 1517.3 L326.5 1517.3 L326.5 1064.2 Z" fill="url(#gLOfloor)" />
<path d="M326.5 1064.2 C344.7 1080.5 394.8 1126.4 435.6 1161.9 C476.4 1197.4 537.8 1249.4 571.2 1277.2 C604.7 1305.0 625.4 1320.1 636.3 1328.7 L636.3 1328.7 L326.5 1517.3 L326.5 1517.3 L326.5 1064.2 Z" fill="#1a5594" />
<path d="M2537.0 1160.0 C2526.7 1169.3 2499.1 1195.8 2475.3 1216.0 C2451.5 1236.2 2421.1 1259.3 2394.0 1281.0 C2366.9 1302.7 2339.7 1326.1 2312.6 1346.0 C2285.5 1365.9 2258.3 1384.1 2231.2 1400.4 C2204.1 1416.7 2177.0 1432.3 2149.9 1443.8 C2122.8 1455.3 2091.1 1464.3 2068.5 1469.5 C2045.9 1474.7 2027.8 1474.5 2014.2 1475.0 C2000.6 1475.5 1993.9 1472.0 1987.1 1472.3 C1980.3 1472.6 1976.9 1475.4 1973.6 1477.0 C1970.2 1478.6 1970.2 1477.8 1967.0 1481.8 C1963.8 1485.8 1957.9 1493.7 1954.4 1500.8 C1951.0 1507.9 1948.4 1514.6 1946.3 1524.3 C1944.2 1534.0 1942.7 1553.0 1942.0 1558.7 L1942.0 1558.7 L1942.7 2064.3 L1942.7 2064.3 L2537.9 1721.2 L2537.9 1721.2 L2537.5 1160.0 Z" fill="#1b5a9c" />
<path d="M2517.4 1209.2 C2505.9 1219.4 2473.3 1248.7 2448.2 1270.2 C2423.1 1291.7 2393.9 1316.8 2366.8 1338.0 C2339.7 1359.2 2312.6 1379.6 2285.5 1397.7 C2258.4 1415.8 2225.1 1434.5 2204.1 1446.5 C2183.1 1458.5 2177.4 1461.8 2159.3 1469.5 C2141.2 1477.2 2117.5 1486.7 2095.6 1492.6 C2073.7 1498.5 2046.3 1503.0 2027.8 1504.8 C2009.3 1506.6 1993.9 1502.0 1984.4 1503.4 C1974.9 1504.8 1974.4 1508.0 1970.8 1513.0 C1967.2 1518.0 1964.3 1524.8 1962.7 1533.3 C1961.1 1541.8 1961.3 1558.9 1961.0 1564.0 L1961.0 1564.0 L1961.2 2031.5 L1961.2 2031.5 L2519.1 1709.2 L2519.1 1709.2 L2517.4 1209.2 Z" fill="url(#gRO)" />
<path d="M2517.4 1209.2 C2505.9 1219.4 2473.3 1248.7 2448.2 1270.2 C2423.1 1291.7 2393.9 1316.8 2366.8 1338.0 C2339.7 1359.2 2312.6 1379.6 2285.5 1397.7 C2258.4 1415.8 2225.1 1434.5 2204.1 1446.5 C2183.1 1458.5 2166.8 1465.7 2159.3 1469.5 L2159.3 1469.5 C2171.3 1481.5 2207.9 1521.3 2231.2 1541.4 C2254.5 1561.5 2269.7 1570.2 2299.0 1590.0 C2328.3 1609.8 2378.5 1643.3 2407.0 1660.0 C2435.5 1676.7 2451.3 1681.8 2470.0 1690.0 C2488.7 1698.2 2510.9 1706.0 2519.1 1709.2 L2519.1 1709.2 L2517.4 1209.2 Z" fill="#2682de" />
<path d="M307.6 1025.0 L717.0 813.0 L717.0 813.0 C720.4 810.2 732.2 802.8 737.5 796.0 C742.8 789.2 746.3 780.3 749.0 772.0 C751.7 763.7 752.8 750.3 753.5 746.0 L753.5 746.0 L753.5 686.0 L753.5 686.0 C754.1 682.0 754.7 669.2 757.0 662.0 C759.3 654.8 763.2 648.7 767.5 642.5 C771.8 636.3 780.4 627.9 783.0 625.0 L783.0 625.0 C790.8 618.5 813.8 597.5 830.0 586.0 C846.2 574.5 859.2 566.5 880.0 556.0 C900.8 545.5 930.0 532.8 955.0 523.0 C980.0 513.2 1000.8 506.7 1030.0 497.0 C1059.2 487.3 1096.7 475.8 1130.0 465.0 C1163.3 454.2 1204.3 441.8 1230.0 432.0 C1255.7 422.2 1264.2 419.7 1284.0 406.0 C1303.8 392.3 1338.2 359.3 1349.0 350.0 L1349.0 350.0 C1368.1 364.6 1427.5 408.9 1463.5 437.8 C1499.5 466.7 1531.3 496.5 1565.2 523.3 C1599.1 550.1 1640.3 579.1 1666.9 598.6 C1693.5 618.1 1704.2 625.9 1724.8 640.0 C1745.4 654.1 1768.1 668.0 1790.6 683.4 C1813.1 698.8 1841.8 720.6 1860.0 732.2 C1878.2 743.8 1885.0 746.4 1900.0 753.0 C1915.0 759.6 1933.3 767.5 1950.0 772.0 C1966.7 776.5 1986.2 778.7 2000.0 780.0 C2013.8 781.3 2027.5 780.0 2033.0 780.0 L2033.0 780.0 C2036.3 781.2 2046.3 782.5 2053.0 787.0 C2059.7 791.5 2067.3 799.8 2073.0 807.0 C2078.7 814.2 2083.8 822.3 2087.0 830.0 C2090.2 837.7 2091.2 849.2 2092.0 853.0 L2092.0 853.0 L2092.0 927.0 L2092.0 927.0 C2092.8 931.3 2094.5 945.5 2097.0 953.0 C2099.5 960.5 2103.2 967.0 2107.0 972.0 C2110.8 977.0 2117.8 981.2 2120.0 983.0 L2120.0 983.0 C2127.8 989.2 2147.5 1004.7 2167.0 1020.0 C2186.5 1035.3 2217.2 1059.8 2237.0 1075.0 C2256.8 1090.2 2269.3 1100.2 2286.0 1111.0 C2302.7 1121.8 2314.5 1130.2 2337.0 1140.0 C2359.5 1149.8 2397.9 1163.5 2421.0 1169.8 C2444.1 1176.1 2459.5 1177.5 2475.3 1178.0 C2491.1 1178.5 2505.6 1175.5 2516.0 1172.5 C2526.4 1169.5 2533.9 1162.1 2537.5 1160.0 L2537.5 1160.0 L2537.9 1721.2 L2537.9 1721.2 L1942.7 2064.3 L1942.7 2064.3 C1928.9 2057.6 1889.9 2039.8 1860.0 2023.8 C1830.1 2007.8 1790.8 1985.0 1763.4 1968.0 C1736.0 1951.0 1718.2 1939.2 1695.6 1922.0 C1673.0 1904.8 1650.4 1883.8 1627.8 1865.0 C1605.2 1846.2 1575.5 1822.7 1560.0 1809.5 C1544.5 1796.3 1538.9 1789.9 1534.7 1786.0 L1534.7 1786.0 C1532.6 1784.9 1527.1 1782.0 1522.0 1779.6 C1516.9 1777.2 1510.0 1773.2 1504.0 1771.4 C1498.0 1769.6 1491.6 1769.2 1486.0 1769.0 C1480.4 1768.8 1475.0 1769.2 1470.5 1770.0 C1466.0 1770.8 1460.9 1773.1 1459.0 1773.7 L1459.0 1773.7 L1400.0 1809.0 L1051.0 2012.0 L1051.0 2012.0 C1035.8 1998.2 982.7 1950.2 960.0 1929.0 C937.3 1907.8 940.3 1907.5 915.0 1885.0 C889.7 1862.5 843.8 1823.5 808.0 1794.0 C772.2 1764.5 738.9 1734.7 700.0 1708.0 C661.1 1681.3 618.7 1656.3 574.9 1634.0 C531.1 1611.7 481.9 1590.4 437.4 1574.0 C392.8 1557.6 329.2 1541.9 307.6 1535.5 L307.6 1535.5 L307.6 1025.0 Z M783.0 625.0 C800.8 637.5 851.6 670.8 890.0 700.0 C928.4 729.2 974.2 766.7 1013.5 800.0 C1052.8 833.3 1089.1 866.7 1126.0 900.0 C1162.9 933.3 1199.2 966.7 1235.0 1000.0 C1270.8 1033.3 1308.3 1070.0 1341.0 1100.0 C1373.7 1130.0 1410.9 1161.6 1431.0 1180.0 C1451.1 1198.4 1456.3 1205.4 1461.4 1210.5 M753.5 686.0 C757.7 688.3 752.8 681.0 778.5 700.0 C804.2 719.0 867.4 766.7 907.5 800.0 C947.6 833.3 983.0 866.7 1019.0 900.0 C1055.0 933.3 1088.6 966.7 1123.5 1000.0 C1158.4 1033.3 1193.5 1066.7 1228.5 1100.0 C1263.5 1133.3 1305.7 1174.1 1333.5 1200.0 C1361.3 1225.9 1385.2 1246.1 1395.6 1255.3 M754.0 747.0 C763.5 755.8 783.3 774.5 811.0 800.0 C838.7 825.5 884.3 866.7 920.0 900.0 C955.7 933.3 988.8 966.7 1025.0 1000.0 C1061.2 1033.3 1100.0 1069.6 1137.5 1100.0 C1175.0 1130.4 1218.8 1160.8 1250.0 1182.5 C1281.2 1204.2 1306.2 1219.2 1325.0 1230.0 C1343.8 1240.8 1350.7 1243.3 1362.5 1247.5 C1374.3 1251.7 1390.1 1254.0 1395.6 1255.3 M717.0 813.0 C732.7 827.5 777.0 868.8 811.0 900.0 C845.0 931.2 884.9 966.7 921.0 1000.0 C957.1 1033.3 990.0 1066.7 1027.5 1100.0 C1065.0 1133.3 1108.9 1173.3 1146.0 1200.0 C1183.1 1226.7 1220.2 1243.8 1250.0 1260.0 C1279.8 1276.2 1304.2 1287.8 1325.0 1297.5 C1345.8 1307.2 1360.6 1313.0 1375.0 1318.0 C1389.4 1323.0 1405.2 1326.2 1411.2 1327.8 M1411.2 1328.5 C1398.8 1337.1 1366.2 1360.6 1337.0 1380.0 C1307.8 1399.4 1265.5 1429.3 1236.0 1445.0 C1206.5 1460.7 1182.7 1467.3 1160.0 1474.0 C1137.3 1480.7 1118.8 1483.0 1100.0 1485.0 C1081.2 1487.0 1060.8 1486.8 1047.0 1486.0 C1033.2 1485.2 1022.0 1481.0 1017.0 1480.0 M1459.3 1403.0 C1449.4 1409.7 1426.0 1427.2 1400.0 1443.0 C1374.0 1458.8 1330.3 1482.7 1303.0 1498.0 C1275.7 1513.3 1258.5 1525.0 1236.0 1535.0 C1213.5 1545.0 1190.7 1553.3 1168.0 1558.0 C1145.3 1562.7 1119.5 1563.8 1100.0 1563.0 C1080.5 1562.2 1059.2 1554.7 1051.0 1553.0 M1610.6 1332.6 C1615.1 1335.7 1624.4 1341.0 1637.7 1351.0 C1651.0 1361.0 1666.6 1376.4 1690.4 1392.3 C1714.2 1408.2 1753.7 1432.6 1780.8 1446.6 C1807.9 1460.6 1832.1 1469.6 1853.2 1476.4 C1874.3 1483.2 1892.3 1485.5 1907.4 1487.3 C1922.5 1489.1 1933.7 1488.2 1943.6 1487.3 C1953.5 1486.4 1963.1 1482.7 1967.0 1481.8 M1534.6 1380.7 C1539.3 1384.8 1552.1 1397.0 1563.0 1405.0 C1573.9 1413.0 1578.8 1414.5 1600.0 1428.5 C1621.2 1442.5 1660.3 1470.9 1690.4 1489.0 C1720.5 1507.1 1756.7 1526.0 1780.8 1537.0 C1804.9 1548.0 1816.9 1550.6 1835.0 1555.0 C1853.1 1559.4 1871.5 1562.6 1889.3 1563.2 C1907.1 1563.8 1933.0 1559.5 1941.8 1558.7 M1664.0 1263.5 C1670.6 1260.2 1687.8 1251.8 1703.4 1244.0 C1719.0 1236.2 1741.6 1225.1 1757.7 1217.0 C1773.8 1208.9 1765.1 1215.1 1800.0 1195.6 C1834.9 1176.1 1913.7 1135.4 1967.0 1100.0 C2020.3 1064.6 2094.5 1002.5 2120.0 983.0 M1276.0 423.0 C1277.3 423.7 1252.8 411.7 1284.0 427.0 C1315.2 442.3 1406.5 487.1 1463.5 515.0 C1520.5 542.9 1587.5 573.7 1626.0 594.5 C1664.5 615.3 1677.0 625.6 1694.3 640.0 C1711.5 654.4 1721.4 667.1 1729.5 680.7 C1737.6 694.3 1740.3 707.9 1743.1 721.4 C1745.9 734.9 1747.0 748.4 1746.5 762.0 C1746.0 775.6 1744.0 785.6 1740.4 802.8 C1736.8 820.0 1730.2 845.5 1724.8 865.0 C1719.4 884.5 1718.4 897.5 1708.0 920.0 C1697.6 942.5 1679.7 970.0 1662.5 1000.0 C1645.3 1030.0 1624.3 1070.0 1605.0 1100.0 C1585.7 1130.0 1560.6 1161.2 1546.8 1180.0 C1533.0 1198.8 1526.5 1207.1 1522.4 1212.5 M1270.0 410.0 C1272.3 411.2 1251.8 401.7 1284.0 417.5 C1316.2 433.3 1406.5 477.6 1463.5 505.0 C1520.5 532.4 1585.5 559.5 1626.0 582.0 C1666.5 604.5 1687.0 623.5 1706.5 640.0 C1726.0 656.5 1734.5 667.1 1743.0 680.7 C1751.5 694.3 1754.0 707.9 1757.3 721.4 C1760.6 734.9 1762.4 747.3 1762.8 762.0 C1763.2 776.7 1761.5 792.3 1759.4 809.5 C1757.3 826.7 1753.6 846.6 1750.0 865.0 C1746.4 883.4 1746.0 897.5 1738.0 920.0 C1730.0 942.5 1717.1 970.0 1702.0 1000.0 C1686.9 1030.0 1661.5 1074.4 1647.5 1100.0 C1633.5 1125.6 1622.9 1144.7 1618.0 1153.6 M1461.4 1210.5 C1463.7 1212.2 1470.5 1218.0 1475.0 1220.7 C1479.5 1223.4 1484.0 1225.6 1488.5 1226.8 C1493.0 1228.0 1497.9 1228.6 1502.0 1228.0 C1506.1 1227.4 1509.6 1226.0 1513.0 1223.4 C1516.4 1220.8 1520.8 1214.3 1522.4 1212.5 M1522.4 1212.5 C1525.8 1210.9 1534.9 1207.1 1542.8 1203.0 C1550.7 1198.9 1559.0 1195.1 1570.0 1188.0 C1581.0 1180.9 1600.5 1166.1 1608.5 1160.4 C1616.5 1154.7 1616.4 1154.7 1618.0 1153.6 M1618.0 1153.6 C1623.2 1152.3 1637.2 1147.6 1649.2 1146.1 C1661.2 1144.6 1676.3 1144.4 1689.9 1144.8 C1703.5 1145.2 1719.8 1147.3 1730.6 1148.2 C1741.4 1149.1 1750.9 1149.9 1755.0 1150.2 M1755.0 1150.2 C1748.7 1157.8 1728.8 1180.6 1717.0 1195.6 C1705.2 1210.6 1692.8 1228.7 1684.0 1240.0 C1675.2 1251.3 1667.3 1259.6 1664.0 1263.5 M1664.0 1263.5 C1658.5 1266.3 1639.9 1275.3 1631.0 1280.4 C1622.1 1285.5 1615.8 1289.9 1610.6 1294.0 C1605.4 1298.1 1601.8 1301.2 1599.7 1304.8 C1597.6 1308.4 1597.2 1312.0 1597.7 1315.6 C1598.2 1319.2 1600.2 1323.7 1602.4 1326.5 C1604.6 1329.3 1609.2 1331.6 1610.6 1332.6 M1461.4 1210.5 C1458.0 1211.5 1447.8 1213.3 1441.0 1216.6 C1434.2 1219.8 1426.4 1225.7 1420.7 1230.0 C1415.0 1234.3 1411.2 1238.2 1407.0 1242.4 C1402.8 1246.6 1397.5 1253.2 1395.6 1255.3 M1395.6 1255.3 C1397.1 1258.6 1401.9 1268.3 1404.4 1275.0 C1406.9 1281.7 1409.2 1288.5 1410.5 1295.3 C1411.8 1302.1 1412.4 1310.2 1412.5 1315.6 C1412.6 1321.0 1411.4 1325.8 1411.2 1327.8 M1411.2 1328.5 C1413.9 1330.9 1422.5 1337.5 1427.5 1342.8 C1432.5 1348.1 1436.9 1354.1 1441.0 1360.4 C1445.1 1366.7 1449.2 1374.6 1451.9 1380.7 C1454.6 1386.8 1456.1 1393.3 1457.3 1397.0 C1458.5 1400.7 1459.0 1402.0 1459.3 1403.0 M1610.6 1332.6 C1607.4 1332.9 1598.4 1332.7 1591.6 1334.6 C1584.8 1336.5 1576.9 1339.7 1569.9 1344.0 C1562.9 1348.3 1555.4 1354.5 1549.5 1360.4 C1543.6 1366.3 1537.1 1376.2 1534.6 1379.4 M1459.3 1403.0 C1461.9 1401.1 1469.0 1395.1 1475.0 1391.6 C1481.0 1388.1 1488.5 1384.2 1495.3 1382.0 C1502.1 1379.8 1509.0 1379.1 1515.6 1378.7 C1522.1 1378.3 1531.4 1379.3 1534.6 1379.4 M308.0 1025.0 C329.3 1043.8 391.7 1099.8 435.6 1137.5 C479.5 1175.2 526.0 1214.8 571.2 1251.4 C616.4 1288.0 666.1 1328.3 706.8 1357.2 C747.5 1386.1 780.0 1406.0 815.3 1425.0 C850.6 1444.0 889.8 1462.5 918.4 1471.0 C947.0 1479.5 972.3 1475.4 987.2 1476.0 C1002.1 1476.6 1000.4 1471.2 1007.8 1474.4 C1015.2 1477.6 1025.5 1486.4 1031.8 1495.0 C1038.1 1503.6 1042.4 1515.7 1045.6 1526.0 C1048.8 1536.3 1050.1 1551.7 1051.0 1556.8 M326.5 1064.2 C344.7 1080.5 394.8 1126.4 435.6 1161.9 C476.4 1197.4 537.8 1249.4 571.2 1277.2 C604.7 1305.0 613.7 1311.3 636.3 1328.7 C658.9 1346.1 677.0 1361.0 706.8 1381.6 C736.6 1402.1 780.0 1432.8 815.3 1452.0 C850.6 1471.2 889.8 1488.1 918.4 1496.7 C947.0 1505.3 971.7 1502.2 987.2 1503.6 C1002.7 1505.0 1004.6 1502.1 1011.2 1505.3 C1017.8 1508.5 1023.2 1515.0 1026.7 1522.5 C1030.2 1530.0 1031.5 1545.4 1032.5 1550.0 M1032.5 1972.0 C1020.4 1961.3 976.2 1922.2 960.0 1907.7 C943.8 1893.2 959.0 1905.1 935.3 1885.0 C911.6 1864.9 857.2 1819.8 818.0 1787.0 C778.8 1754.2 740.5 1717.3 700.0 1688.0 C659.5 1658.7 618.7 1633.8 574.9 1611.0 C531.1 1588.2 478.8 1566.6 437.4 1551.0 C396.0 1535.4 345.0 1522.9 326.5 1517.3 M2537.0 1160.0 C2526.7 1169.3 2499.1 1195.8 2475.3 1216.0 C2451.5 1236.2 2421.1 1259.3 2394.0 1281.0 C2366.9 1302.7 2339.7 1326.1 2312.6 1346.0 C2285.5 1365.9 2258.3 1384.1 2231.2 1400.4 C2204.1 1416.7 2177.0 1432.3 2149.9 1443.8 C2122.8 1455.3 2091.1 1464.3 2068.5 1469.5 C2045.9 1474.7 2027.8 1474.5 2014.2 1475.0 C2000.6 1475.5 1993.9 1472.0 1987.1 1472.3 C1980.3 1472.6 1976.9 1475.4 1973.6 1477.0 C1970.2 1478.6 1970.2 1477.8 1967.0 1481.8 C1963.8 1485.8 1957.9 1493.7 1954.4 1500.8 C1951.0 1507.9 1948.4 1514.6 1946.3 1524.3 C1944.2 1534.0 1942.7 1553.0 1942.0 1558.7 M2517.4 1209.2 C2505.9 1219.4 2473.3 1248.7 2448.2 1270.2 C2423.1 1291.7 2393.9 1316.8 2366.8 1338.0 C2339.7 1359.2 2312.6 1379.6 2285.5 1397.7 C2258.4 1415.8 2225.1 1434.5 2204.1 1446.5 C2183.1 1458.5 2177.4 1461.8 2159.3 1469.5 C2141.2 1477.2 2117.5 1486.7 2095.6 1492.6 C2073.7 1498.5 2046.3 1503.0 2027.8 1504.8 C2009.3 1506.6 1993.9 1502.0 1984.4 1503.4 C1974.9 1504.8 1974.4 1508.0 1970.8 1513.0 C1967.2 1518.0 1964.3 1524.8 1962.7 1533.3 C1961.1 1541.8 1961.3 1558.9 1961.0 1564.0 M2159.3 1469.5 C2171.3 1481.5 2207.9 1521.3 2231.2 1541.4 C2254.5 1561.5 2269.7 1570.2 2299.0 1590.0 C2328.3 1609.8 2378.5 1643.3 2407.0 1660.0 C2435.5 1676.7 2451.3 1681.8 2470.0 1690.0 C2488.7 1698.2 2510.9 1706.0 2519.1 1709.2 M2092.0 927.0 L1755.0 1150.2 M2033.0 781.0 L1618.0 1153.6 M2092.0 855.0 L1755.0 1150.2 M1459.3 1403.0 L1459.0 1773.7 M1534.6 1379.4 L1534.7 1786.0 M1051.0 1556.8 L1051.0 2012.0 M1942.0 1558.7 L1942.7 2064.3 M1032.5 1550.0 L1032.5 1972.0 M326.5 1517.3 L326.5 1064.2 M636.3 1328.7 L326.5 1517.3 M1961.0 1564.0 L1961.2 2031.5 M2519.1 1709.2 L1961.2 2031.5 M2519.1 1709.2 L2517.4 1209.2 M1284.0 406.0 L1270.0 410.0" fill="none" stroke="#000" stroke-width="3.1" stroke-linejoin="round" stroke-linecap="round" />
</svg>
<!--MODEL_END-->

<div id="botline" class="abs" style="left:0;top:2159px;width:2868px;height:3px;background:linear-gradient(#c4c4c4,#7a7a7a);"></div>
<div class="abs" style="left:0;top:2155px;width:8px;height:7px;background:#2a4a78;clip-path:polygon(0 0,0 100%,100% 100%,100% 60%);"></div>
<!-- menu bar -->
<div id="menubar" class="abs">
<svg class="abs" style="left:41px;top:4px" width="30" height="34" viewBox="0 0 30 34"><path fill="#252e40" d="M20.6 0.5c.2 2-.6 3.9-1.8 5.3-1.2 1.4-3.1 2.500-5 2.350-.25-1.900.7-3.900 1.800-5.150C16.850 1.550 19 .550 20.600.5zM26.500 11.800c-.2.150-3.350 1.950-3.300 5.800.05 4.600 4.050 6.100 4.100 6.150-.05.100-.65 2.200-2.150 4.350-1.300 1.900-2.650 3.750-4.750 3.800-2.100.05-2.750-1.250-5.150-1.250-2.400 0-3.150 1.200-5.100 1.300-2.050.1-3.600-2.050-4.900-3.900C2.550 24.200.500 17.250 3.250 12.500c1.350-2.350 3.800-3.850 6.450-3.900 2-.05 3.900 1.350 5.150 1.350 1.200 0 3.550-1.650 5.950-1.400 1 .05 3.850.4 5.700 3.250z"/></svg>
<span style="left:107px;font-weight:bold;">ViaCAD 2D3D 9</span>
<span style="left:358px;">File</span>
<span style="left:439px;">Edit</span>
<span style="left:527px;">View</span>
<span style="left:626px;">WorkPlane</span>
<span style="left:804px;">Draw</span>
<span style="left:908px;">Modify</span>
<span style="left:1033px;">Verify</span>
<span style="left:1142px;">PowerPack</span>
<span style="left:1328px;">Window</span>
<span style="left:1470px;">Help</span>
</div>

<!-- info bar -->
<div id="infobar" class="abs"></div>

<div class="vline" style="left:149px"></div>
<div class="vline" style="left:1009px"></div>
<div class="vline" style="left:1055px"></div>
<div class="vline" style="left:2041px"></div>
<div class="vline" style="left:2089px"></div>
<svg class="abs" style="left:40px;top:56px" width="80" height="130" viewBox="0 0 80 130">
<defs><linearGradient id="refl" x1="0" y1="0" x2="0" y2="1"><stop offset="0" stop-color="#888" stop-opacity=".75"/><stop offset="1" stop-color="#aaa" stop-opacity="0"/></linearGradient></defs>
<path d="M16 8 L16 70 L30 58 L45 90 L58 84 L44 54 L64 52 Z" fill="#111" stroke="#111" stroke-width="2" stroke-linejoin="round"/>
<path d="M45 94 L58 98 L44 120 L30 118 Z" fill="url(#refl)"/>
<path d="M16 110 L22 118 L30 112 L28 120 L16 120Z" fill="url(#refl)" opacity=".5"/>
</svg>
<div class="abs" style="left:167px;top:51px;font-size:38px;font-weight:bold;line-height:46px;letter-spacing:-0.3px;">Selection</div>
<div class="abs" style="left:167px;top:147px;font-size:25px;line-height:32px;letter-spacing:0.5px;">Select additional objects</div>
<div class="abs" style="left:595px;top:52px;width:400px;text-align:right;font-size:21.5px;line-height:28px;letter-spacing:0.35px;">'Shift' to add/remove selections</div>
<div class="abs" style="left:595px;top:82px;width:400px;text-align:right;font-size:21.5px;line-height:28px;letter-spacing:0.47px;">Drag right to left for partial selection</div>
<svg class="abs" style="left:1021px;top:60px" width="28" height="26" viewBox="0 0 28 26"><path d="M1 2 L27 2 L14 25 Z" fill="#7b7b7b"/></svg>
<div class="abs" style="left:1023px;top:138px;font-size:32px;font-weight:bold;font-style:italic;color:#6e6e6e;line-height:38px;">?</div>
<svg class="abs" style="left:2049px;top:58px" width="34" height="34" viewBox="0 0 34 34"><circle cx="17" cy="17" r="13.500" fill="none" stroke="#666" stroke-width="3"/><path d="M17 3v9M17 22v9M3 17h9M22 17h9" stroke="#666" stroke-width="2.500"/></svg>
<div class="abs" style="left:2059px;top:138px;font-size:32px;font-weight:bold;font-style:italic;color:#555;line-height:38px;font-family:'Liberation Serif',serif;">i</div>
<div class="abs" style="left:2118px;top:66px;font-size:26px;line-height:34px;font-weight:bold;color:#ee1c24;">X =</div>
<div class="abs" style="left:2118px;top:106px;font-size:26px;line-height:34px;font-weight:bold;color:#2ca02c;">Y =</div>
<div class="abs" style="left:2118px;top:146px;font-size:26px;line-height:34px;font-weight:bold;color:#1030e8;">Z =</div>
<div class="abs" style="left:2176px;top:66px;font-size:26px;line-height:34px;letter-spacing:0.5px;">3.988"</div>
<div class="abs" style="left:2176px;top:106px;font-size:26px;line-height:34px;letter-spacing:0.5px;">&#8211;0.817"</div>
<div class="abs" style="left:2176px;top:146px;font-size:26px;line-height:34px;letter-spacing:0.5px;">0.0"</div>
<div class="abs" style="left:0;top:192px;width:2868px;height:4px;background:#ececec;"></div>
<div class="abs" style="left:0;top:191px;width:9px;height:8px;background:#27477e;"></div>


<div id="peek" class="abs" style="left:0;top:192px;width:140px;height:3px;"><div class="abs" style="left:24px;top:0;width:23px;height:3px;background:#d8d8d8;border-radius:2px 2px 0 0"></div><div class="abs" style="left:64px;top:0;width:23px;height:3px;background:#d8d8d8;border-radius:2px 2px 0 0"></div><div class="abs" style="left:104px;top:0;width:23px;height:3px;background:#d8d8d8;border-radius:2px 2px 0 0"></div></div>
<!-- document title bar -->
<div id="titlebar" class="abs"></div>

<div class="tl" style="left:16px;top:206px;"></div>
<div class="abs" style="left:24px;top:214px;width:8px;height:8px;border-radius:50%;background:#5a5a5a;"></div>
<div class="tl" style="left:56px;top:206px;"></div>
<div class="tl" style="left:96px;top:206px;"></div>
<div class="abs" style="left:1131px;top:201px;width:600px;text-align:center;font-size:27px;line-height:34px;letter-spacing:0.28px;color:#3e3e3e;">ImpressiveBlendShell.vc3*--Isometric</div>


<!--PALETTE_START-->
<div class="abs" style="left:0;top:276px;width:149px;height:1296px;background:#ececec;border:1px solid #c4c4c4;border-left:none;box-shadow:6px 8px 22px rgba(0,0,0,.28);box-sizing:border-box;"></div>
<div class="abs" style="left:0;top:277px;width:148px;height:31px;background:#f6f6f6;border-bottom:1px solid #c9c9c9;"></div>
<div class="abs" style="left:12px;top:281px;width:21px;height:21px;border-radius:50%;background:#dcdcdc;border:1px solid #cbcbcb;"></div>
<svg class="abs" style="left:0;top:276px" width="150" height="1300" viewBox="0 276 150 1300">
<defs>
<linearGradient id="pl1" x1="0" y1="0" x2="0" y2="1"><stop offset="0" stop-color="#6aaae6"/><stop offset="0.45" stop-color="#3f86cf"/><stop offset="0.5" stop-color="#1f62aa"/><stop offset="1" stop-color="#2c76c0"/></linearGradient>
<linearGradient id="pl2" x1="0" y1="0" x2="0" y2="1"><stop offset="0" stop-color="#4f97dd"/><stop offset="1" stop-color="#a9cdf1"/></linearGradient>
<radialGradient id="sph" cx=".38" cy=".32" r=".7"><stop offset="0" stop-color="#8fd8ff"/><stop offset=".45" stop-color="#1f8de0"/><stop offset="1" stop-color="#0b3f86"/></radialGradient>
<radialGradient id="gold" cx=".38" cy=".32" r=".7"><stop offset="0" stop-color="#fff3b0"/><stop offset=".5" stop-color="#f0b020"/><stop offset="1" stop-color="#8a5a00"/></radialGradient>
<linearGradient id="grn" x1="0" y1="0" x2="1" y2="1"><stop offset="0" stop-color="#7cc850"/><stop offset="1" stop-color="#3f9a2c"/></linearGradient>
<linearGradient id="cubeT" x1="0" y1="0" x2="1" y2="1"><stop offset="0" stop-color="#5cc4f6"/><stop offset="1" stop-color="#2f9de8"/></linearGradient>
<linearGradient id="gcube" x1="0" y1="0" x2="1" y2="1"><stop offset="0" stop-color="#9a9a9a"/><stop offset="1" stop-color="#5e5e5e"/></linearGradient>
</defs>
<rect x="2" y="310" width="144" height="68" fill="url(#pl1)"/>
<text x="8" y="340" font-family="Liberation Sans" font-weight="bold" font-size="27" fill="#b9d8f4" textLength="50" lengthAdjust="spacingAndGlyphs">2D</text>
<text x="87" y="340" font-family="Liberation Sans" font-weight="bold" font-size="27" fill="#eef6ff" textLength="53" lengthAdjust="spacingAndGlyphs">3D</text>
<path d="M6 350 L30 350 L43 366 L56 350 L62 350 L62 372 L52 372 L43 372 L34 372 Z M66 350 L80 350 L80 372 L66 372Z M84 372 L108 350 L118 350 L142 372 L124 372 L120 367 L106 367 L102 372Z" fill="#39a6e4"/>
<rect x="4" y="381" width="64" height="63" fill="url(#pl2)"/>
<path d="M21 390 L21 436 L32 427 L41 448 L52 443 L43 423 L57 421 Z" fill="#0c0c0c"/>
<path d="M94 391 L94 431 L104 423 L112 441 L121 437 L113 419 L125 418 Z" fill="#fff" stroke="#111" stroke-width="3" stroke-linejoin="miter"/>
<path d="M141 445 L141 434 L130 445 Z" fill="#7d7d7d"/>
<rect x="4" y="452" width="140" height="2" fill="#5e5e5e"/>
<path d="M25 491 H51 M38 478 V504" stroke="#0c0c0c" stroke-width="8"/>
<circle cx="38" cy="491" r="4.2" fill="#e8141c"/>
<path d="M69 523 L69 512 L58 523 Z" fill="#7d7d7d"/>
<path d="M82 515 L139 467" stroke="#111" stroke-width="4"/>
<circle cx="82" cy="515" r="3.2" fill="#e8141c"/>
<circle cx="139" cy="467" r="3.2" fill="#e8141c"/>
<path d="M141 523 L141 512 L130 523 Z" fill="#7d7d7d"/>
<path d="M35 535 A24 24 0 1 1 17 575" fill="none" stroke="#111" stroke-width="4.500"/>
<circle cx="35" cy="535" r="3.2" fill="#e8141c"/>
<circle cx="17" cy="575" r="3.2" fill="#e8141c"/>
<circle cx="36" cy="559" r="3.2" fill="#e8141c"/>
<path d="M69 591 L69 580 L58 591 Z" fill="#7d7d7d"/>
<circle cx="109" cy="559" r="24" fill="none" stroke="#111" stroke-width="4.500"/>
<circle cx="85" cy="559" r="3.2" fill="#e8141c"/>
<circle cx="133" cy="559" r="3.2" fill="#e8141c"/>
<path d="M141 591 L141 580 L130 591 Z" fill="#7d7d7d"/>
<path d="M17 605 Q50 612 54 652" fill="none" stroke="#111" stroke-width="4.500"/>
<circle cx="17" cy="605" r="3.2" fill="#e8141c"/>
<circle cx="54" cy="652" r="3.2" fill="#e8141c"/>
<path d="M69 659 L69 648 L58 659 Z" fill="#7d7d7d"/>
<ellipse cx="109" cy="629" rx="27" ry="16" fill="none" stroke="#111" stroke-width="5"/><path d="M82 611 H137 V644" fill="none" stroke="#333" stroke-width="1.500"/>
<circle cx="109" cy="629" r="3.2" fill="#e8141c"/>
<circle cx="136" cy="612" r="3.2" fill="#e8141c"/>
<path d="M141 659 L141 648 L130 659 Z" fill="#7d7d7d"/>
<rect x="16" y="673" width="45" height="46" fill="none" stroke="#111" stroke-width="4.500"/>
<circle cx="16" cy="673" r="3.2" fill="#e8141c"/>
<circle cx="61" cy="719" r="3.2" fill="#e8141c"/>
<path d="M69 727 L69 716 L58 727 Z" fill="#7d7d7d"/>
<path d="M83 719 C88 690 96 684 104 700 C112 716 126 724 137 673" fill="none" stroke="#111" stroke-width="5"/>
<circle cx="83" cy="719" r="3.2" fill="#e8141c"/>
<circle cx="99" cy="689" r="3.2" fill="#e8141c"/>
<circle cx="120" cy="707" r="3.2" fill="#e8141c"/>
<circle cx="137" cy="673" r="3.2" fill="#e8141c"/>
<path d="M141 727 L141 716 L130 727 Z" fill="#7d7d7d"/>
<path d="M11 740 H40 Q62 742 62 790" fill="none" stroke="#111" stroke-width="4.500"/><path d="M40 740 H62 V764" fill="none" stroke="#555" stroke-width="1.200"/>
<circle cx="36" cy="740" r="3.2" fill="#e8141c"/>
<circle cx="62" cy="765" r="3.2" fill="#e8141c"/>
<circle cx="33" cy="766" r="1.6" fill="#e8141c"/>
<path d="M69 795 L69 784 L58 795 Z" fill="#7d7d7d"/>
<path d="M86 742 L136 788 M86 788 L121 757" stroke="#111" stroke-width="5"/><path d="M121 757 L137 738" stroke="#e8141c" stroke-width="3.500"/>
<circle cx="122" cy="751" r="3.8" fill="#e8141c"/>
<path d="M141 795 L141 784 L130 795 Z" fill="#7d7d7d"/>
<text x="10" y="860" font-family="Liberation Serif" font-size="78" fill="#111">A</text>
<path d="M69 863 L69 852 L58 863 Z" fill="#7d7d7d"/>
<circle cx="98" cy="823" r="7.500" fill="none" stroke="#111" stroke-width="2.500"/><path d="M103 817 Q108 808 116 806" fill="none" stroke="#e8141c" stroke-width="2"/><path d="M87 835 H133" stroke="#333" stroke-width="2"/><path d="M91 842 V858 M131 842 V858" stroke="#111" stroke-width="3.500"/><path d="M96 850 H126" stroke="#e8141c" stroke-width="3.500"/><path d="M96 850 l7 -5 v10z M126 850 l-7 -5 v10z" fill="#e8141c"/>
<path d="M141 863 L141 852 L130 863 Z" fill="#7d7d7d"/>
<rect x="30" y="873" width="15" height="58" fill="#d4d4d4"/><path d="M37.500 878 V925" stroke="#111" stroke-width="4.500"/>
<circle cx="37.5" cy="878" r="3.2" fill="#e8141c"/>
<circle cx="37.5" cy="927" r="3.2" fill="#e8141c"/>
<path d="M69 931 L69 920 L58 931 Z" fill="#7d7d7d"/>
<defs><pattern id="hat" width="7" height="7" patternUnits="userSpaceOnUse" patternTransform="rotate(40)"><rect width="7" height="3.500" fill="#111"/></pattern></defs><path d="M86 876 H134 V902 L110 926 H86Z" fill="url(#hat)"/><path d="M84 869 V934 M79 876 H141 M79 926 H120 M136 869 V905 M102 934 L140 898" fill="none" stroke="#111" stroke-width="4"/>
<circle cx="109" cy="898" r="3.2" fill="#e8141c"/>
<path d="M141 931 L141 920 L130 931 Z" fill="#7d7d7d"/>
<rect x="4" y="938" width="140" height="2" fill="#5e5e5e"/>
<rect x="37" y="959" width="29" height="29" fill="none" stroke="#111" stroke-width="5"/><rect x="23" y="974" width="28" height="28" fill="none" stroke="#666" stroke-width="2.200"/><path d="M8 967 L18 955" stroke="#e8141c" stroke-width="3.500"/><path d="M20 952 l-9 3 6 6z" fill="#e8141c"/>
<circle cx="37" cy="988" r="3.2" fill="#e8141c"/>
<circle cx="23" cy="1002" r="3.2" fill="#e8141c"/>
<path d="M69 1009 L69 998 L58 1009 Z" fill="#7d7d7d"/>
<path d="M97 1000 C104 975 128 995 138 968" fill="none" stroke="#111" stroke-width="3"/><rect x="81" y="986" width="13" height="13" fill="#ececec" stroke="#111" stroke-width="3"/><rect x="103" y="969" width="12" height="12" fill="#ececec" stroke="#111" stroke-width="3"/><rect x="123" y="953" width="11" height="11" fill="#ececec" stroke="#111" stroke-width="3"/>
<circle cx="97" cy="1001" r="3.2" fill="#e8141c"/>
<circle cx="117" cy="985" r="3.2" fill="#e8141c"/>
<circle cx="138" cy="968" r="3.2" fill="#e8141c"/>
<path d="M141 1009 L141 998 L130 1009 Z" fill="#7d7d7d"/>
<rect x="4" y="1016" width="140" height="2" fill="#5e5e5e"/>
<path d="M10 1055 L41 1030 L64 1081 Z" fill="url(#grn)" stroke="#5a9a40" stroke-width="1"/>
<circle cx="10" cy="1055" r="2.6" fill="#e8141c"/>
<circle cx="41" cy="1030" r="2.6" fill="#e8141c"/>
<circle cx="63" cy="1080" r="2.6" fill="#e8141c"/>
<path d="M69 1087 L69 1076 L58 1087 Z" fill="#7d7d7d"/>
<circle cx="109" cy="1055" r="24" fill="url(#sph)"/>
<circle cx="110" cy="1056" r="3" fill="#e8141c"/>
<path d="M141 1087 L141 1076 L130 1087 Z" fill="#7d7d7d"/>
<path d="M22 1110 L41 1098 L44 1136 L24 1150 Z" fill="url(#grn)" opacity=".95"/><path d="M33 1098 V1150 M20 1128 L48 1118" stroke="#8a8a8a" stroke-width="1.500"/><path d="M33 1124 L50 1128" stroke="#e8141c" stroke-width="4"/><path d="M57 1129 l-11 -6 0 11z" fill="#e8141c"/>
<path d="M69 1155 L69 1144 L58 1155 Z" fill="#7d7d7d"/>
<path d="M80 1128 A29 29 0 0 1 139 1128 L139 1141 L122 1148 L122 1135 A12 12 0 0 0 97 1135 L97 1148 L80 1141Z" fill="#1d5e9c"/><path d="M80 1128 A29 29 0 0 1 139 1128 L122 1135 A12 12 0 0 0 97 1135Z" fill="#3aa7ea"/><path d="M109 1118 V1150" stroke="#7a0a0a" stroke-width="5"/><path d="M98 1104 Q110 1092 123 1106" fill="none" stroke="#e8141c" stroke-width="5"/><path d="M127 1113 l-10 -4 7 -8z" fill="#e8141c"/>
<path d="M141 1155 L141 1144 L130 1155 Z" fill="#7d7d7d"/>
<path d="M13 1167 L24 1190 L13 1180Z" fill="#4aa334"/><path d="M20 1196 Q36 1172 48 1184 Q56 1192 65 1198 L40 1217 Z" fill="url(#grn)"/><path d="M30 1190 Q42 1180 52 1200" fill="none" stroke="#c2301c" stroke-width="1.500"/>
<path d="M69 1223 L69 1212 L58 1223 Z" fill="#7d7d7d"/>
<path d="M86 1180 L109 1166 Q128 1172 132 1184 L132 1206 L109 1220 L86 1206Z" fill="#1c63ac"/><path d="M86 1180 L109 1166 Q128 1172 132 1184 L109 1196Z" fill="url(#cubeT)"/><path d="M109 1196 L132 1184 L132 1206 L109 1220Z" fill="#2476c4"/>
<path d="M141 1223 L141 1212 L130 1223 Z" fill="#7d7d7d"/>
<path d="M8 1252 A20 12 0 0 1 48 1246 L66 1240 L68 1272 L44 1288 L30 1280 A20 12 0 0 1 8 1276Z" fill="#13487f" stroke="#0a2540" stroke-width="2"/><ellipse cx="28" cy="1250" rx="20" ry="12" fill="#59c4f2" stroke="#0a2540" stroke-width="2"/><path d="M40 1262 L66 1240 L56 1238 L30 1252Z" fill="#59c4f2" stroke="#0a2540" stroke-width="1.500"/><path d="M50 1243 H66 M58 1235 V1251" stroke="#e8141c" stroke-width="5"/>
<path d="M69 1291 L69 1280 L58 1291 Z" fill="#7d7d7d"/>
<path d="M82 1260 L109 1244 L136 1260 L136 1270 L109 1286 L82 1270Z" fill="#2d6cb4"/><path d="M82 1260 L109 1244 L136 1260 L109 1276Z" fill="#c45a54"/><path d="M82 1260 L109 1276 L136 1260 L136 1268 L109 1284 L82 1268Z" fill="#4d8fd0" opacity=".8"/><path d="M109 1262 V1242" stroke="#e8141c" stroke-width="4"/><path d="M109 1232 l-6 11 12 0z" fill="#e8141c"/>
<path d="M141 1291 L141 1280 L130 1291 Z" fill="#7d7d7d"/>
<rect x="4" y="1298" width="140" height="2" fill="#5e5e5e"/>
<g stroke="#e2b23a" stroke-width="2.200"><path d="M28 1350 L52 1366 M31 1346 L56 1362 M34 1342 L59 1358 M37 1338 L62 1354 M40 1334 L65 1350 M43 1331 L66 1345"/></g><circle cx="26" cy="1326" r="15" fill="url(#gold)"/>
<path d="M69 1369 L69 1358 L58 1369 Z" fill="#7d7d7d"/>
<path d="M81 1313 H128 L139 1323 V1363 H81Z" fill="#f4f4f4" stroke="#111" stroke-width="3.500"/><path d="M110 1313 V1363 M81 1338 H139" stroke="#111" stroke-width="2.500"/><circle cx="97" cy="1326" r="6" fill="none" stroke="#444" stroke-width="1.500"/><rect x="91" y="1344" width="12" height="12" fill="none" stroke="#444" stroke-width="1.500"/><rect x="118" y="1344" width="12" height="12" fill="none" stroke="#444" stroke-width="1.500"/><path d="M118 1322 v10 a4.500 2 0 0 0 9 0 v-10z" fill="#1f6fc0"/><ellipse cx="122.500" cy="1322" rx="4.500" ry="2" fill="#5bc0f0"/>
<path d="M141 1369 L141 1358 L130 1369 Z" fill="#7d7d7d"/>
<rect x="4" y="1376" width="140" height="2" fill="#5e5e5e"/>
<path d="M22 1420 Q17 1409 20 1407 Q24 1406 28 1418 L27 1397 Q27 1392 30.500 1392 Q34 1392 34 1397 L36 1414 L37 1393 Q37 1388 40.500 1388 Q44 1388 44 1393 L45 1414 L48 1397 Q49 1392 52 1393 Q55 1394 54 1399 L53 1419 L58 1408 Q61 1404 63 1406 Q65 1408 62 1414 L54 1436 Q52 1442 50 1446 L32 1446 Q27 1440 22 1420Z" fill="#5b5b5b"/>
<path d="M69 1445 L69 1434 L58 1445 Z" fill="#7d7d7d"/>
<circle cx="104" cy="1408" r="17" fill="none" stroke="#5b5b5b" stroke-width="5"/><path d="M95 1408 H113 M104 1399 V1417" stroke="#5b5b5b" stroke-width="4"/><path d="M117 1421 L134 1440" stroke="#5b5b5b" stroke-width="9" stroke-linecap="round"/>
<path d="M141 1445 L141 1434 L130 1445 Z" fill="#7d7d7d"/>
<rect x="4" y="1454" width="140" height="2" fill="#5e5e5e"/>
<path d="M25 1465 L44 1474.98 L44 1497.02 L25 1507 L6 1497.02 L6 1474.98Z" fill="none" stroke="#4a4a4a" stroke-width="3" stroke-linejoin="round"/><path d="M6 1474.98 L25 1487 L44 1474.98 M25 1487 V1507" fill="none" stroke="#4a4a4a" stroke-width="3"/>
<path d="M25 1465 V1487 M6 1497 L25 1487 L44 1497" fill="none" stroke="#4a4a4a" stroke-width="2.500"/>
<path d="M74 1465 L93 1474.98 L93 1497.02 L74 1507 L55 1497.02 L55 1474.98Z" fill="none" stroke="#4a4a4a" stroke-width="3" stroke-linejoin="round"/><path d="M55 1474.98 L74 1487 L93 1474.98 M74 1487 V1507" fill="none" stroke="#4a4a4a" stroke-width="3"/>
<path d="M122 1465 L141 1474.98 L141 1497.02 L122 1507 L103 1497.02 L103 1474.98Z" fill="none" stroke="#4a4a4a" stroke-width="3" stroke-linejoin="round"/><path d="M103 1474.98 L122 1487 L141 1474.98 M122 1487 V1507" fill="none" stroke="#4a4a4a" stroke-width="3"/>
<path d="M122 1465 V1487 M103 1497 L122 1487 L141 1497" fill="none" stroke="#9a9a9a" stroke-width="1.500"/>
<rect x="2" y="1515" width="48" height="52" fill="url(#pl2)"/>
<path d="M26 1520 L45 1531 L45 1553 L26 1564 L7 1553 L7 1531Z" fill="#5a5a5a"/><path d="M26 1520 L45 1531 L26 1542 L7 1531Z" fill="#a9a9a9"/><path d="M7 1531 L26 1542 L26 1564 L7 1553Z" fill="#7b7b7b"/>
<path d="M74 1521 L93 1530.98 L93 1553.02 L74 1563 L55 1553.02 L55 1530.98Z" fill="none" stroke="#4a4a4a" stroke-width="3.2" stroke-linejoin="round"/><path d="M55 1530.98 L74 1543 L93 1530.98 M74 1543 V1563" fill="none" stroke="#4a4a4a" stroke-width="3.2"/>
<rect x="101" y="1518" width="42" height="46" fill="#f4f4f4" stroke="#d0d0d0" stroke-width="1"/><rect x="101" y="1518" width="42" height="10" fill="#dcdcdc"/><circle cx="107" cy="1523" r="2.500" fill="#e0524a"/><circle cx="116" cy="1523" r="2.500" fill="#e8b43a"/><circle cx="125" cy="1523" r="2.500" fill="#5cc24a"/>
<path d="M122 1534 L134 1541.04 L134 1554.96 L122 1562 L110 1554.96 L110 1541.04Z" fill="none" stroke="#4a4a4a" stroke-width="2" stroke-linejoin="round"/><path d="M110 1541.04 L122 1549 L134 1541.04 M122 1549 V1562" fill="none" stroke="#4a4a4a" stroke-width="2"/>
</svg>
<!--PALETTE_END-->
<!--FLOATBAR_START-->
<div class="abs" style="left:875px;top:329px;width:409px;height:101px;background:#ececec;border:1px solid #c2c2c2;box-sizing:border-box;box-shadow:0 10px 26px rgba(0,0,0,.33);"></div>
<div class="abs" style="left:876px;top:330px;width:407px;height:31px;background:#f5f5f5;border-bottom:1px solid #cacaca;"></div>
<div class="abs" style="left:888px;top:335px;width:20px;height:20px;border-radius:50%;background:#dedede;border:1px solid #cdcdcd;"></div>
<svg class="abs" style="left:875px;top:362px" width="409" height="68" viewBox="875 362 409 68">
<defs>
<linearGradient id="fT" x1="0" y1="0" x2="1" y2="1"><stop offset="0" stop-color="#4fc0f8"/><stop offset="1" stop-color="#2a9ae8"/></linearGradient>
<linearGradient id="fR" x1="0" y1="0" x2="1" y2="0"><stop offset="0" stop-color="#1d62ac"/><stop offset="1" stop-color="#154a86"/></linearGradient>
<linearGradient id="fRd" x1="0" y1="0" x2="1" y2="0"><stop offset="0" stop-color="#7fd0ff"/><stop offset=".5" stop-color="#2d86d6"/><stop offset="1" stop-color="#0f3560"/></linearGradient>
</defs>
<linearGradient id="fFil" gradientUnits="userSpaceOnUse" x1="915" y1="378" x2="930" y2="402"><stop offset="0" stop-color="#3fb8f7"/><stop offset=".35" stop-color="#62ccfb"/><stop offset=".7" stop-color="#1b5ea8"/><stop offset="1" stop-color="#0f3a6a"/></linearGradient>
<linearGradient id="fCyl" gradientUnits="userSpaceOnUse" x1="1106" y1="0" x2="1126" y2="0"><stop offset="0" stop-color="#2a86d4"/><stop offset=".45" stop-color="#184f8c"/><stop offset="1" stop-color="#0f3a68"/></linearGradient>
<path d="M911 371 L934 384 L934 411 L911 425 L888 411 L888 384 Z" fill="#113f74" />
<path d="M888 384 L911 397 L911 425 L888 411 Z" fill="#1c62ac" />
<path d="M911 371 L934 384 L911 397 L888 384 Z" fill="#3fb8f7" />
<path d="M917 374 L934 384 L934 399 L911 411 L911 397 L899 390 Z" fill="url(#fFil)" />
<path d="M888 384 L911 397 L911 425 L888 411 Z" fill="#1c62ac" />
<path d="M911 371 L919 375.5 L898 389.5 L888 384 Z" fill="#3fb8f7" />
<path d="M957 384 L969 390.5 L980 404 L980 425 L957 411 Z" fill="#1c62ac" />
<path d="M980 404 L1003 391 L1003 411 L980 425 Z" fill="#113f74" />
<path d="M992 377.5 L1003 391 L980 404 L969 390.5 Z" fill="#2070c2" />
<path d="M980 371 L992 377.5 L969 390.5 L957 384 Z" fill="#3fb8f7" />
<path d="M1048 371 L1071 384 L1048 397 L1025 384 Z" fill="#3fb8f7" />
<path d="M1025 384 L1048 397 L1048 425 L1025 411 Z" fill="#1c62ac" />
<path d="M1048 397 L1071 384 L1071 411 L1048 425 Z" fill="#113f74" />
<path d="M1049 397 Q1051 384 1064 381 L1071 384 L1071 396 Z" fill="#2b86d6"/>
<ellipse cx="1061" cy="402" rx="8" ry="10" fill="#071f3c"/>
<path d="M1051 395 q2 -10 14 -11" fill="none" stroke="#6fd0fb" stroke-width="2.500"/>
<path d="M1090 406 L1116 421 L1142 406 L1142 410 L1116 425 L1090 410 Z" fill="#1a5ca6" />
<path d="M1090 406 L1116 392 L1142 406 L1116 421 Z" fill="#3fb8f7" />
<path d="M1118 396 L1140 407 L1124 415 Z" fill="#1d5fa6" opacity=".75"/>
<path d="M1106.5 378 V406 a9.500 5.500 0 0 0 19 0 V378Z" fill="url(#fCyl)"/><ellipse cx="1116" cy="378" rx="9.500" ry="5.500" fill="#43baf7"/>
<path d="M1103 410 a12 6 0 0 0 22 1" fill="none" stroke="#7fd8fc" stroke-width="2" opacity=".8"/>
<path d="M1184 371 L1207 384 L1184 397 L1161 384 Z" fill="#4cbef8" />
<path d="M1161 384 L1184 397 L1184 425 L1161 411 Z" fill="#1c62ac" />
<path d="M1184 397 L1207 384 L1207 411 L1184 425 Z" fill="#113f74" />
<path d="M1184 374 L1202.5 384.5 L1184 394 L1165.5 384.5 Z" fill="#06203c" />
<path d="M1184 374 L1202.5 384.5 L1190 391 Z" fill="#1a5a9e" />
<path d="M1228 409 L1249 423 L1274 407 L1274 410 L1249 426 L1228 412 Z" fill="#1a5ca6" />
<path d="M1228 409 L1250 394 L1274 407 L1249 423 Z" fill="#3fb8f7" />
<path d="M1239 402 L1261 415 L1267 411 L1245 398 Z" fill="#2f9ae8" />
<path d="M1250 371 L1274 386 L1274 407 L1250 394 Z" fill="#1b60a8" />
<path d="M1250 371 L1253 369 L1277 384 L1274 386 Z" fill="#3fb8f7" />
<path d="M1274 386 L1277 384 L1277 406 L1274 407 Z" fill="#174f90" />
</svg>
<!--FLOATBAR_END-->
<!--EXPLORER_START-->
<div class="abs" style="left:2179px;top:329px;width:590px;height:612px;background:#ececec;border:1px solid #bdbdbd;box-sizing:border-box;box-shadow:0 12px 34px rgba(0,0,0,.36);"></div>
<div class="abs" style="left:2180px;top:330px;width:588px;height:32px;background:linear-gradient(#efefef,#d9d9d9);border-bottom:1px solid #b9b9b9;"></div>
<div class="abs" style="left:2192px;top:335px;width:21px;height:21px;border-radius:50%;background:#f0554e;border:1px solid #d8433c;box-sizing:border-box;"></div>
<div class="abs" style="left:2180px;top:330px;width:588px;height:32px;text-align:center;font-size:23.500px;line-height:32px;color:#4b4b4b;">Concept Explorer</div>
<div class="abs" style="left:2204px;top:396px;width:530px;height:503px;background:#e3e3e3;border-radius:9px;border:1px solid #dadada;box-sizing:border-box;"></div>
<div class="abs" style="left:2295px;top:380px;width:349px;height:34px;background:#fff;border-radius:7px;border:1px solid #c8c8c8;box-sizing:border-box;box-shadow:0 1px 1px rgba(0,0,0,.12);"></div>
<div class="abs" style="left:2295px;top:380px;width:126px;height:34px;background:linear-gradient(#6cb2fa,#2a88f4 60%,#1b7df2);border-radius:7px 0 0 7px;"></div>
<div class="abs" style="left:2521px;top:381px;width:1px;height:32px;background:#d2d2d2;"></div>
<div class="abs" style="left:2295px;top:382px;width:126px;text-align:center;font-size:21px;line-height:32px;color:#fff;letter-spacing:.3px;">Features</div>
<div class="abs" style="left:2421px;top:382px;width:100px;text-align:center;font-size:21px;line-height:32px;color:#000;letter-spacing:.3px;">Layers</div>
<div class="abs" style="left:2522px;top:382px;width:122px;text-align:center;font-size:21px;line-height:32px;color:#000;letter-spacing:.3px;">Symbols</div>
<div class="abs" style="left:2316px;top:437px;font-size:20.600px;line-height:30px;letter-spacing:0px;white-space:nowrap;">Part_126</div>
<div class="abs" style="left:2364px;top:486px;font-size:20.600px;line-height:30px;letter-spacing:0px;white-space:nowrap;">ACIS Solid_44</div>
<div class="abs" style="left:2364px;top:536px;font-size:20.600px;line-height:30px;letter-spacing:0px;white-space:nowrap;">Remove Face_127</div>
<div class="abs" style="left:2364px;top:586px;font-size:20.600px;line-height:30px;letter-spacing:0px;white-space:nowrap;">Trim Solid_865</div>
<div class="abs" style="left:2364px;top:636px;font-size:20.600px;line-height:30px;letter-spacing:0px;white-space:nowrap;">Fillet_894</div>
<div class="abs" style="left:2364px;top:686px;font-size:20.600px;line-height:30px;letter-spacing:0px;white-space:nowrap;">Shell_951</div>
<svg class="abs" style="left:2204px;top:420px" width="200" height="320" viewBox="2204 420 200 320">
<path d="M2229 441 L2247 441 L2238 451Z" fill="#111"/>
<path d="M2281 587 L2281 608 L2292 597.500Z" fill="#111"/>
<path d="M2285 426 L2305 437 L2305 457 L2285 468 L2265 457 L2265 437Z" fill="#9cc4dc" opacity=".75"/><path d="M2285 426 L2305 437 L2285 448 L2265 437Z" fill="#bfe0f0" opacity=".9"/><path d="M2285 448 V468" stroke="#7aa6c0" stroke-width="1"/>
<g transform="translate(2285 447) scale(0.55)" fill="none" stroke-linecap="round"><g transform="rotate(0)"><path d="M0 2 C-9 -2 -10 -17 0 -19 C10 -17 9 -2 0 2" stroke="#1a66b0" stroke-width="6"/><path d="M0 2 C-9 -2 -10 -17 0 -19" stroke="#3a9be0" stroke-width="6"/></g><g transform="rotate(120)"><path d="M0 2 C-9 -2 -10 -17 0 -19 C10 -17 9 -2 0 2" stroke="#1a66b0" stroke-width="6"/><path d="M0 2 C-9 -2 -10 -17 0 -19" stroke="#3a9be0" stroke-width="6"/></g><g transform="rotate(240)"><path d="M0 2 C-9 -2 -10 -17 0 -19 C10 -17 9 -2 0 2" stroke="#1a66b0" stroke-width="6"/><path d="M0 2 C-9 -2 -10 -17 0 -19" stroke="#3a9be0" stroke-width="6"/></g></g>
<g transform="translate(2333 500) scale(0.95)" fill="none" stroke-linecap="round"><g transform="rotate(0)"><path d="M0 2 C-9 -2 -10 -17 0 -19 C10 -17 9 -2 0 2" stroke="#0f559c" stroke-width="6"/><path d="M0 2 C-9 -2 -10 -17 0 -19" stroke="#2a95e6" stroke-width="6"/></g><g transform="rotate(120)"><path d="M0 2 C-9 -2 -10 -17 0 -19 C10 -17 9 -2 0 2" stroke="#0f559c" stroke-width="6"/><path d="M0 2 C-9 -2 -10 -17 0 -19" stroke="#2a95e6" stroke-width="6"/></g><g transform="rotate(240)"><path d="M0 2 C-9 -2 -10 -17 0 -19 C10 -17 9 -2 0 2" stroke="#0f559c" stroke-width="6"/><path d="M0 2 C-9 -2 -10 -17 0 -19" stroke="#2a95e6" stroke-width="6"/></g></g>
<path d="M2329 530 L2345 539.04 L2329 549 L2313 539.04Z" fill="#4cbcf4"/><path d="M2313 539.04 L2329 549 L2329 567 L2313 557.96Z" fill="#1f6ab6"/><path d="M2329 549 L2345 539.04 L2345 557.96 L2329 567Z" fill="#a8404c"/>
<path d="M2347 529 l8 8 m0 -8 l-8 8" stroke="#d01820" stroke-width="3"/>
<path d="M2331 581 L2346 589.6 L2331 599 L2316 589.6Z" fill="#4cbcf4"/><path d="M2316 589.6 L2331 599 L2331 616 L2316 607.4Z" fill="#1f6ab6"/><path d="M2331 599 L2346 589.6 L2346 607.4 L2331 616Z" fill="#164c88"/>
<path d="M2335 578 L2348 584 L2348 612 L2335 606Z" fill="none" stroke="#c03030" stroke-width="1.500"/><path d="M2348 584 V612" stroke="#b02020" stroke-width="3"/>
<path d="M2333 630 L2350 639.48 L2333 650 L2316 639.48Z" fill="#4cbcf4"/><path d="M2316 639.48 L2333 650 L2333 669 L2316 659.52Z" fill="#1f6ab6"/><path d="M2333 650 L2350 639.48 L2350 659.52 L2333 669Z" fill="#164c88"/>
<path d="M2333 630 Q2350 634 2350 640 L2333 650Z" fill="#7fd4fb" opacity=".6"/>
<path d="M2333 680 L2350 689.48 L2333 700 L2316 689.48Z" fill="#2e96e4"/><path d="M2316 689.48 L2333 700 L2333 719 L2316 709.52Z" fill="#1f6ab6"/><path d="M2333 700 L2350 689.48 L2350 709.52 L2333 719Z" fill="#164c88"/>
<path d="M2333 684 L2346 691.500 L2333 699 L2320 691.500Z" fill="#06203c"/>
</svg>
<!--EXPLORER_END-->
<!--AXIS_START-->
<svg class="abs" style="left:2760px;top:270px" width="80" height="90" viewBox="2760 270 80 90" shape-rendering="crispEdges">
<path d="M2778 290 V330" stroke="#6262f2" stroke-width="3.600"/>
<path d="M2780.500 277 h7 l-7 10 h7.500" fill="none" stroke="#4a4af0" stroke-width="2.200"/>
<path d="M2779 329 L2797 319.500" stroke="#111" stroke-width="2.200"/>
<path d="M2797 319.500 L2816 309.500" stroke="#1fa83a" stroke-width="2.200" stroke-dasharray="3 1.500"/>
<path d="M2813 296.500 v7 M2820.500 296.500 v7 M2820.500 303 L2814 313" fill="none" stroke="#4db85e" stroke-width="2.600"/>
<path d="M2779 329 L2805 345.500" stroke="#1a0c0c" stroke-width="2.600"/>
<path d="M2805 345.500 L2812 349.500" stroke="#ff2020" stroke-width="2.200" stroke-dasharray="2 1.500"/>
<path d="M2797 319.500 L2805 345.500" stroke="#111" stroke-width="2"/>
<path d="M2814 339 l9 10 m0 -10 l-9 10" stroke="#ff1414" stroke-width="2.600"/>
</svg>
<!--AXIS_END-->
</body>
</html>
